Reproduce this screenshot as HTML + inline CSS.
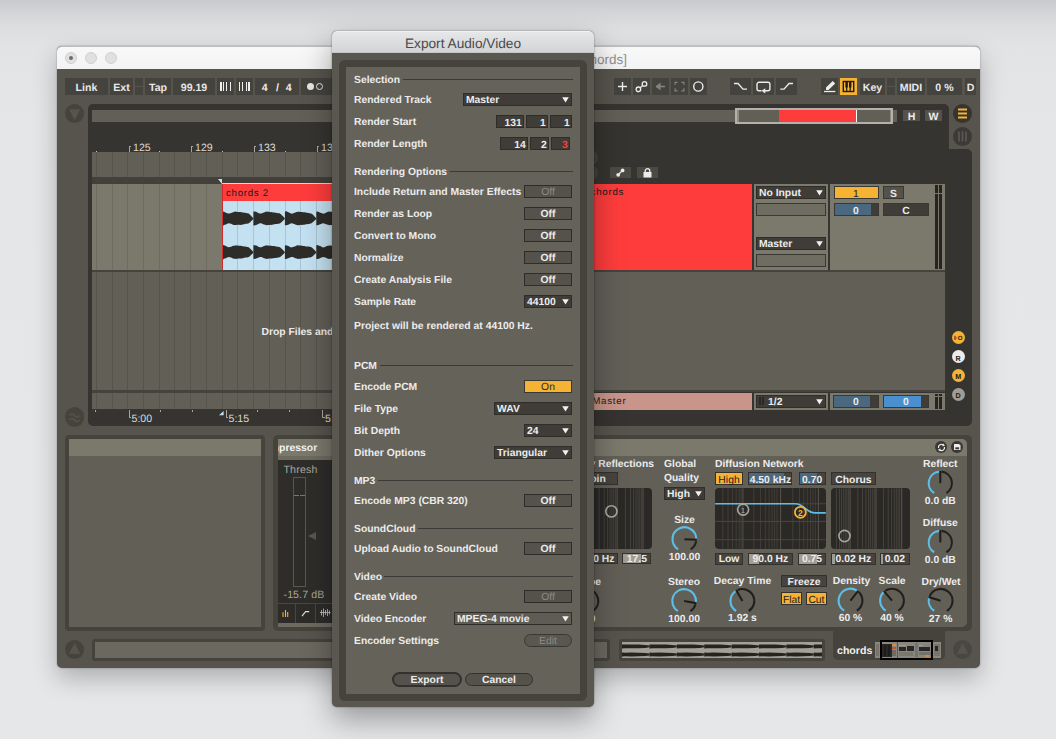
<!DOCTYPE html><html><head><meta charset="utf-8"><style>
html,body{margin:0;padding:0;}
body{width:1056px;height:739px;overflow:hidden;position:relative;background:#e4e5e7;}
.a{position:absolute;box-sizing:border-box;}
.t{font-family:"Liberation Sans",sans-serif;white-space:nowrap;text-rendering:geometricPrecision;}
svg{font-family:"Liberation Sans",sans-serif;}
</style></head><body>
<div class="a" style="left:0.00px;top:0.00px;width:1056.00px;height:739.00px;background:linear-gradient(to bottom,#c9cacd 0px,#d3d4d6 12px,#dcdddf 26px,#e2e3e5 45px,#e5e6e8 120px,#e6e7e9 739px);"></div>
<div class="a" style="left:57px;top:46px;width:923px;height:622px;border-radius:5px;background:#57544d;box-shadow:0 10px 24px rgba(0,0,0,0.25),0 0 2px rgba(0,0,0,0.35);"></div>
<div class="a" style="left:57.00px;top:46.00px;width:923.00px;height:23.00px;background:linear-gradient(#f8f8f8,#f3f3f3);border-radius:5px 5px 0 0;border-top:1px solid #bcbcbc;"></div>
<div class="a" style="left:65.00px;top:52.00px;width:12.00px;height:12.00px;background:#e0e0e0;border-radius:50%;border:1px solid #d0d0d0;"></div>
<div class="a" style="left:68.80px;top:55.80px;width:4.40px;height:4.40px;background:#6e6c66;border-radius:50%;"></div>
<div class="a" style="left:85.00px;top:52.00px;width:12.00px;height:12.00px;background:#e0e0e0;border-radius:50%;border:1px solid #d0d0d0;"></div>
<div class="a" style="left:105.00px;top:52.00px;width:12.00px;height:12.00px;background:#e0e0e0;border-radius:50%;border:1px solid #d0d0d0;"></div>
<div class="a t" style="left:227.00px;width:400px;text-align:right;top:52.77px;font-size:13.5px;line-height:13.5px;color:#8f8f8f;font-weight:normal;">Untitled &nbsp;[chords]</div>
<div class="a" style="left:65.00px;top:78.00px;width:43.00px;height:17.00px;background:#45433e;"></div>
<div class="a t" style="left:-113.50px;width:400px;text-align:center;top:82.63px;font-size:10.6px;line-height:10.6px;color:#e8e8e8;font-weight:bold;">Link</div>
<div class="a" style="left:110.00px;top:78.00px;width:23.00px;height:17.00px;background:#45433e;"></div>
<div class="a t" style="left:-78.50px;width:400px;text-align:center;top:82.63px;font-size:10.6px;line-height:10.6px;color:#e8e8e8;font-weight:bold;">Ext</div>
<div class="a" style="left:135.00px;top:78.00px;width:8.00px;height:17.00px;background:#45433e;"></div>
<div class="a" style="left:135.00px;top:86.00px;width:8.00px;height:1.00px;background:#57544d;"></div>
<div class="a" style="left:145.00px;top:78.00px;width:26.00px;height:17.00px;background:#45433e;"></div>
<div class="a t" style="left:-42.00px;width:400px;text-align:center;top:82.63px;font-size:10.6px;line-height:10.6px;color:#e8e8e8;font-weight:bold;">Tap</div>
<div class="a" style="left:173.00px;top:78.00px;width:42.00px;height:17.00px;background:#45433e;"></div>
<div class="a t" style="left:-6.00px;width:400px;text-align:center;top:82.63px;font-size:10.6px;line-height:10.6px;color:#e8e8e8;font-weight:bold;">99.19</div>
<div class="a" style="left:217.00px;top:78.00px;width:17.00px;height:17.00px;background:#45433e;"></div>
<div class="a" style="left:236.00px;top:78.00px;width:17.00px;height:17.00px;background:#45433e;"></div>
<div class="a" style="left:219.80px;top:82.00px;width:2.00px;height:9.00px;background:#eeeeee;"></div>
<div class="a" style="left:223.40px;top:82.00px;width:1.10px;height:9.00px;background:#eeeeee;"></div>
<div class="a" style="left:226.00px;top:82.00px;width:1.10px;height:9.00px;background:#eeeeee;"></div>
<div class="a" style="left:229.60px;top:82.00px;width:1.10px;height:9.00px;background:#eeeeee;"></div>
<div class="a" style="left:238.80px;top:82.00px;width:1.10px;height:9.00px;background:#eeeeee;"></div>
<div class="a" style="left:242.40px;top:82.00px;width:1.10px;height:9.00px;background:#eeeeee;"></div>
<div class="a" style="left:245.50px;top:82.00px;width:1.10px;height:9.00px;background:#eeeeee;"></div>
<div class="a" style="left:248.10px;top:82.00px;width:2.00px;height:9.00px;background:#eeeeee;"></div>
<div class="a" style="left:255.00px;top:78.00px;width:44.00px;height:17.00px;background:#45433e;"></div>
<div class="a t" style="left:64.80px;width:400px;text-align:center;top:82.63px;font-size:10.6px;line-height:10.6px;color:#ececec;font-weight:bold;">4</div>
<div class="a t" style="left:77.60px;width:400px;text-align:center;top:82.63px;font-size:10.6px;line-height:10.6px;color:#ececec;font-weight:bold;">/</div>
<div class="a t" style="left:88.80px;width:400px;text-align:center;top:82.63px;font-size:10.6px;line-height:10.6px;color:#ececec;font-weight:bold;">4</div>
<div class="a" style="left:301.00px;top:78.00px;width:39.00px;height:17.00px;background:#45433e;"></div>
<div class="a" style="left:306.60px;top:82.70px;width:7.60px;height:7.60px;background:#e6e6e6;border-radius:50%;"></div>
<div class="a" style="left:315.80px;top:82.90px;width:7.40px;height:7.40px;border-radius:50%;border:1.3px solid #e6e6e6;"></div>
<div class="a" style="left:614.00px;top:78.00px;width:17.00px;height:17.00px;background:#45433e;"></div>
<div class="a" style="left:633.00px;top:78.00px;width:17.00px;height:17.00px;background:#45433e;"></div>
<div class="a" style="left:652.00px;top:78.00px;width:17.00px;height:17.00px;background:#45433e;"></div>
<div class="a" style="left:671.00px;top:78.00px;width:17.00px;height:17.00px;background:#45433e;"></div>
<div class="a" style="left:690.00px;top:78.00px;width:17.00px;height:17.00px;background:#45433e;"></div>
<svg class="a" style="left:614px;top:78px;overflow:visible" width="17" height="17" viewBox="0 0 17 17"><path d="M4 8.5H13M8.5 4V13" stroke="#ececec" stroke-width="1.4"/></svg>
<svg class="a" style="left:633px;top:78px;overflow:visible" width="17" height="17" viewBox="0 0 17 17"><circle cx="5.4" cy="11.3" r="2.3" fill="none" stroke="#ececec" stroke-width="1.3"/><circle cx="11.5" cy="5.9" r="2.3" fill="none" stroke="#ececec" stroke-width="1.3"/><path d="M7.1 9.8L9.8 7.4" stroke="#ececec" stroke-width="1.3"/></svg>
<svg class="a" style="left:652px;top:78px;overflow:visible" width="17" height="17" viewBox="0 0 17 17"><path d="M4 8.5H13" stroke="#86837b" stroke-width="1.6"/><path d="M3.5 8.5L8.5 4.5V12.5Z" fill="#86837b"/></svg>
<svg class="a" style="left:671px;top:78px;overflow:visible" width="17" height="17" viewBox="0 0 17 17"><path d="M4.1 6.8V4.3H6.6M10.4 4.3H12.9V6.8M12.9 10.3V12.8H10.4M6.6 12.8H4.1V10.3" fill="none" stroke="#86837b" stroke-width="1.2"/></svg>
<svg class="a" style="left:690px;top:78px;overflow:visible" width="17" height="17" viewBox="0 0 17 17"><circle cx="8.3" cy="8.5" r="4.6" fill="none" stroke="#ececec" stroke-width="1.4"/></svg>
<div class="a" style="left:730.00px;top:78.00px;width:21.00px;height:17.00px;background:#45433e;"></div>
<div class="a" style="left:753.00px;top:78.00px;width:21.00px;height:17.00px;background:#45433e;"></div>
<div class="a" style="left:776.00px;top:78.00px;width:21.00px;height:17.00px;background:#45433e;"></div>
<svg class="a" style="left:730px;top:78px;overflow:visible" width="21" height="17" viewBox="0 0 21 17"><path d="M4 5.5H8L13 11.1H17" fill="none" stroke="#ececec" stroke-width="1.4"/></svg>
<svg class="a" style="left:753px;top:78px;overflow:visible" width="21" height="17" viewBox="0 0 21 17"><path d="M8.5 12.8H6A2 2 0 0 1 4 10.8V6.3A2 2 0 0 1 6 4.3H14.9A2 2 0 0 1 16.9 6.3V10.8A2 2 0 0 1 14.9 12.8H12" fill="none" stroke="#ececec" stroke-width="1.4"/><path d="M8.5 12.8L12.3 10.2V15.4Z" fill="#ececec"/></svg>
<svg class="a" style="left:776px;top:78px;overflow:visible" width="21" height="17" viewBox="0 0 21 17"><path d="M4.3 11.1H8L13 5.5H17" fill="none" stroke="#ececec" stroke-width="1.4"/></svg>
<div class="a" style="left:821.00px;top:78.00px;width:17.00px;height:17.00px;background:#45433e;"></div>
<svg class="a" style="left:821px;top:78px;overflow:visible" width="17" height="17" viewBox="0 0 17 17"><path d="M5 9.5L11.7 2.9L14.2 5.4L7.5 12.1H5Z" fill="#ececec"/><path d="M3 13.5H14.3" stroke="#ececec" stroke-width="1.3"/></svg>
<div class="a" style="left:840.00px;top:78.00px;width:17.00px;height:17.00px;background:#f6b232;"></div>
<svg class="a" style="left:840px;top:78px;overflow:visible" width="17" height="17" viewBox="0 0 17 17"><rect x="3.3" y="3.5" width="10.4" height="10" fill="none" stroke="#1c1b19" stroke-width="1.4"/><path d="M6.7 3.5V13.5M10.2 3.5V13.5" stroke="#1c1b19" stroke-width="1.2"/><rect x="5.4" y="3.5" width="2.4" height="6" fill="#1c1b19"/><rect x="9" y="3.5" width="2.4" height="6" fill="#1c1b19"/></svg>
<div class="a" style="left:860.00px;top:78.00px;width:25.00px;height:17.00px;background:#45433e;"></div>
<div class="a t" style="left:672.50px;width:400px;text-align:center;top:82.63px;font-size:10.6px;line-height:10.6px;color:#e8e8e8;font-weight:bold;">Key</div>
<div class="a" style="left:887.00px;top:78.00px;width:8.00px;height:17.00px;background:#45433e;"></div>
<div class="a" style="left:887.00px;top:86.00px;width:8.00px;height:1.00px;background:#57544d;"></div>
<div class="a" style="left:897.00px;top:78.00px;width:28.00px;height:17.00px;background:#45433e;"></div>
<div class="a t" style="left:711.00px;width:400px;text-align:center;top:82.63px;font-size:10.6px;line-height:10.6px;color:#e8e8e8;font-weight:bold;">MIDI</div>
<div class="a" style="left:927.00px;top:78.00px;width:35.00px;height:17.00px;background:#45433e;"></div>
<div class="a t" style="left:744.50px;width:400px;text-align:center;top:82.63px;font-size:10.6px;line-height:10.6px;color:#e8e8e8;font-weight:bold;">0 %</div>
<div class="a" style="left:965.00px;top:78.00px;width:11.00px;height:17.00px;background:#45433e;"></div>
<div class="a t" style="left:770.50px;width:400px;text-align:center;top:82.63px;font-size:10.6px;line-height:10.6px;color:#e8e8e8;font-weight:bold;">D</div>
<div class="a" style="left:65.00px;top:103.80px;width:19.20px;height:19.20px;background:#46433d;border-radius:50%;"></div>
<svg class="a" style="left:64px;top:103px;overflow:visible" width="21" height="21" viewBox="0 0 21 21"><polygon points="5,6.3 16.2,6.3 10.6,17.2" fill="#57544d"/></svg>
<div class="a" style="left:65.00px;top:407.40px;width:19.20px;height:19.20px;background:#46433d;border-radius:50%;"></div>
<svg class="a" style="left:64px;top:407px;overflow:visible" width="21" height="21" viewBox="0 0 21 21"><path d="M5.5 8.5C7.5 6.5 9 6.5 10.5 8.5S13.5 10.5 15.5 8.5M5.5 13C7.5 11 9 11 10.5 13S13.5 15 15.5 13" fill="none" stroke="#57544d" stroke-width="1.6"/></svg>
<div class="a" style="left:65.00px;top:639.70px;width:19.20px;height:19.20px;background:#46433d;border-radius:50%;"></div>
<svg class="a" style="left:64px;top:639px;overflow:visible" width="21" height="21" viewBox="0 0 21 21"><polygon points="5,14.8 16.2,14.8 10.6,4" fill="#57544d"/></svg>
<div class="a" style="left:88.00px;top:104.00px;width:861.00px;height:322.00px;background:#363430;border-radius:5px;"></div>
<div class="a" style="left:900.00px;top:149.00px;width:72.00px;height:277.00px;background:#363430;border-radius:5px;"></div>
<div class="a" style="left:92.00px;top:110.00px;width:805.00px;height:12.00px;background:#625f57;"></div>
<div class="a" style="left:735.00px;top:108.00px;width:158.00px;height:16.00px;border:2px solid #b3b1aa;"></div>
<div class="a" style="left:737.00px;top:110.00px;width:1.50px;height:12.00px;background:#8f8c85;"></div>
<div class="a" style="left:889.50px;top:110.00px;width:1.50px;height:12.00px;background:#8f8c85;"></div>
<div class="a" style="left:778.50px;top:110.00px;width:77.00px;height:12.00px;background:#ff3c3c;"></div>
<div class="a" style="left:855.50px;top:110.00px;width:1.50px;height:12.00px;background:#ffffff;"></div>
<div class="a" style="left:903.00px;top:110.00px;width:17.00px;height:11.00px;background:#55524b;"></div>
<div class="a t" style="left:711.50px;width:400px;text-align:center;top:112.23px;font-size:10.6px;line-height:10.6px;color:#ececec;font-weight:bold;">H</div>
<div class="a" style="left:925.00px;top:110.00px;width:17.00px;height:11.00px;background:#55524b;"></div>
<div class="a t" style="left:733.50px;width:400px;text-align:center;top:112.23px;font-size:10.6px;line-height:10.6px;color:#ececec;font-weight:bold;">W</div>
<div class="a" style="left:953.00px;top:104.10px;width:18.80px;height:18.80px;background:#363430;border-radius:50%;"></div>
<svg class="a" style="left:952px;top:103px;overflow:visible" width="21" height="21" viewBox="0 0 21 21"><path d="M6 6.5H15M6 10.5H15M6 14.5H15" stroke="#f6b232" stroke-width="2.2"/></svg>
<div class="a" style="left:953.00px;top:126.80px;width:18.80px;height:18.80px;background:#3c3a36;border-radius:50%;"></div>
<svg class="a" style="left:952px;top:126px;overflow:visible" width="21" height="21" viewBox="0 0 21 21"><path d="M7 5.5V15.5M10.5 5.5V15.5M14 5.5V15.5" stroke="#5d5a53" stroke-width="1.6"/></svg>
<div class="a" style="left:128.50px;top:146.00px;width:1.00px;height:6.00px;background:#a8a59d;"></div>
<div class="a" style="left:128.50px;top:146.00px;width:2.50px;height:1.00px;background:#a8a59d;"></div>
<div class="a t" style="left:133.00px;top:143.03px;font-size:10.6px;line-height:10.6px;color:#dcdad4;font-weight:normal;">125</div>
<div class="a" style="left:190.50px;top:146.00px;width:1.00px;height:6.00px;background:#a8a59d;"></div>
<div class="a" style="left:190.50px;top:146.00px;width:2.50px;height:1.00px;background:#a8a59d;"></div>
<div class="a t" style="left:195.00px;top:143.03px;font-size:10.6px;line-height:10.6px;color:#dcdad4;font-weight:normal;">129</div>
<div class="a" style="left:253.50px;top:146.00px;width:1.00px;height:6.00px;background:#a8a59d;"></div>
<div class="a" style="left:253.50px;top:146.00px;width:2.50px;height:1.00px;background:#a8a59d;"></div>
<div class="a t" style="left:258.00px;top:143.03px;font-size:10.6px;line-height:10.6px;color:#dcdad4;font-weight:normal;">133</div>
<div class="a" style="left:316.50px;top:146.00px;width:1.00px;height:6.00px;background:#a8a59d;"></div>
<div class="a" style="left:316.50px;top:146.00px;width:2.50px;height:1.00px;background:#a8a59d;"></div>
<div class="a t" style="left:321.00px;top:143.03px;font-size:10.6px;line-height:10.6px;color:#dcdad4;font-weight:normal;">137</div>
<div class="a" style="left:95.90px;top:151.00px;width:1.00px;height:1.00px;background:#c8c6c0;"></div>
<div class="a" style="left:159.00px;top:151.00px;width:1.00px;height:1.00px;background:#c8c6c0;"></div>
<div class="a" style="left:221.80px;top:151.00px;width:1.00px;height:1.00px;background:#c8c6c0;"></div>
<div class="a" style="left:285.00px;top:151.00px;width:1.00px;height:1.00px;background:#c8c6c0;"></div>
<div class="a" style="left:92.00px;top:177.00px;width:502.00px;height:7.00px;background:#43403b;"></div>
<div class="a" style="left:92.00px;top:270.00px;width:502.00px;height:2.00px;background:#46433d;"></div>
<div class="a" style="left:92.00px;top:390.00px;width:502.00px;height:3.00px;background:#46433d;"></div>
<div class="a" style="left:594.00px;top:270.00px;width:351.00px;height:2.00px;background:#46433d;"></div>
<div class="a" style="left:594.00px;top:390.00px;width:351.00px;height:2.00px;background:#46433d;"></div>
<div class="a" style="left:92.00px;top:152.00px;width:502.00px;height:25.00px;background:#625f57;"></div>
<div class="a" style="left:92.00px;top:184.00px;width:502.00px;height:86.00px;background:#7b786c;"></div>
<div class="a" style="left:92.00px;top:272.00px;width:502.00px;height:118.00px;background:#625f57;"></div>
<div class="a" style="left:92.00px;top:393.00px;width:502.00px;height:16.00px;background:#625f57;"></div>
<div class="a" style="left:96.00px;top:152.00px;width:1.00px;height:25.00px;background:#57544c;"></div>
<div class="a" style="left:96.00px;top:184.00px;width:1.00px;height:86.00px;background:#6e6b60;"></div>
<div class="a" style="left:96.00px;top:272.00px;width:1.00px;height:118.00px;background:#57544c;"></div>
<div class="a" style="left:96.00px;top:393.00px;width:1.00px;height:16.00px;background:#57544c;"></div>
<div class="a" style="left:112.00px;top:152.00px;width:1.00px;height:25.00px;background:#57544c;"></div>
<div class="a" style="left:112.00px;top:184.00px;width:1.00px;height:86.00px;background:#6e6b60;"></div>
<div class="a" style="left:112.00px;top:272.00px;width:1.00px;height:118.00px;background:#57544c;"></div>
<div class="a" style="left:112.00px;top:393.00px;width:1.00px;height:16.00px;background:#57544c;"></div>
<div class="a" style="left:127.00px;top:152.00px;width:1.00px;height:25.00px;background:#57544c;"></div>
<div class="a" style="left:127.00px;top:184.00px;width:1.00px;height:86.00px;background:#6e6b60;"></div>
<div class="a" style="left:127.00px;top:272.00px;width:1.00px;height:118.00px;background:#57544c;"></div>
<div class="a" style="left:127.00px;top:393.00px;width:1.00px;height:16.00px;background:#57544c;"></div>
<div class="a" style="left:143.00px;top:152.00px;width:1.00px;height:25.00px;background:#57544c;"></div>
<div class="a" style="left:143.00px;top:184.00px;width:1.00px;height:86.00px;background:#6e6b60;"></div>
<div class="a" style="left:143.00px;top:272.00px;width:1.00px;height:118.00px;background:#57544c;"></div>
<div class="a" style="left:143.00px;top:393.00px;width:1.00px;height:16.00px;background:#57544c;"></div>
<div class="a" style="left:159.00px;top:152.00px;width:1.00px;height:25.00px;background:#57544c;"></div>
<div class="a" style="left:159.00px;top:184.00px;width:1.00px;height:86.00px;background:#6e6b60;"></div>
<div class="a" style="left:159.00px;top:272.00px;width:1.00px;height:118.00px;background:#57544c;"></div>
<div class="a" style="left:159.00px;top:393.00px;width:1.00px;height:16.00px;background:#57544c;"></div>
<div class="a" style="left:174.00px;top:152.00px;width:1.00px;height:25.00px;background:#57544c;"></div>
<div class="a" style="left:174.00px;top:184.00px;width:1.00px;height:86.00px;background:#6e6b60;"></div>
<div class="a" style="left:174.00px;top:272.00px;width:1.00px;height:118.00px;background:#57544c;"></div>
<div class="a" style="left:174.00px;top:393.00px;width:1.00px;height:16.00px;background:#57544c;"></div>
<div class="a" style="left:190.00px;top:152.00px;width:1.00px;height:25.00px;background:#57544c;"></div>
<div class="a" style="left:190.00px;top:184.00px;width:1.00px;height:86.00px;background:#6e6b60;"></div>
<div class="a" style="left:190.00px;top:272.00px;width:1.00px;height:118.00px;background:#57544c;"></div>
<div class="a" style="left:190.00px;top:393.00px;width:1.00px;height:16.00px;background:#57544c;"></div>
<div class="a" style="left:206.00px;top:152.00px;width:1.00px;height:25.00px;background:#57544c;"></div>
<div class="a" style="left:206.00px;top:184.00px;width:1.00px;height:86.00px;background:#6e6b60;"></div>
<div class="a" style="left:206.00px;top:272.00px;width:1.00px;height:118.00px;background:#57544c;"></div>
<div class="a" style="left:206.00px;top:393.00px;width:1.00px;height:16.00px;background:#57544c;"></div>
<div class="a" style="left:222.00px;top:152.00px;width:1.00px;height:25.00px;background:#57544c;"></div>
<div class="a" style="left:222.00px;top:184.00px;width:1.00px;height:86.00px;background:#6e6b60;"></div>
<div class="a" style="left:222.00px;top:272.00px;width:1.00px;height:118.00px;background:#57544c;"></div>
<div class="a" style="left:222.00px;top:393.00px;width:1.00px;height:16.00px;background:#57544c;"></div>
<div class="a" style="left:237.00px;top:152.00px;width:1.00px;height:25.00px;background:#57544c;"></div>
<div class="a" style="left:237.00px;top:184.00px;width:1.00px;height:86.00px;background:#6e6b60;"></div>
<div class="a" style="left:237.00px;top:272.00px;width:1.00px;height:118.00px;background:#57544c;"></div>
<div class="a" style="left:237.00px;top:393.00px;width:1.00px;height:16.00px;background:#57544c;"></div>
<div class="a" style="left:253.00px;top:152.00px;width:1.00px;height:25.00px;background:#57544c;"></div>
<div class="a" style="left:253.00px;top:184.00px;width:1.00px;height:86.00px;background:#6e6b60;"></div>
<div class="a" style="left:253.00px;top:272.00px;width:1.00px;height:118.00px;background:#57544c;"></div>
<div class="a" style="left:253.00px;top:393.00px;width:1.00px;height:16.00px;background:#57544c;"></div>
<div class="a" style="left:269.00px;top:152.00px;width:1.00px;height:25.00px;background:#57544c;"></div>
<div class="a" style="left:269.00px;top:184.00px;width:1.00px;height:86.00px;background:#6e6b60;"></div>
<div class="a" style="left:269.00px;top:272.00px;width:1.00px;height:118.00px;background:#57544c;"></div>
<div class="a" style="left:269.00px;top:393.00px;width:1.00px;height:16.00px;background:#57544c;"></div>
<div class="a" style="left:285.00px;top:152.00px;width:1.00px;height:25.00px;background:#57544c;"></div>
<div class="a" style="left:285.00px;top:184.00px;width:1.00px;height:86.00px;background:#6e6b60;"></div>
<div class="a" style="left:285.00px;top:272.00px;width:1.00px;height:118.00px;background:#57544c;"></div>
<div class="a" style="left:285.00px;top:393.00px;width:1.00px;height:16.00px;background:#57544c;"></div>
<div class="a" style="left:300.00px;top:152.00px;width:1.00px;height:25.00px;background:#57544c;"></div>
<div class="a" style="left:300.00px;top:184.00px;width:1.00px;height:86.00px;background:#6e6b60;"></div>
<div class="a" style="left:300.00px;top:272.00px;width:1.00px;height:118.00px;background:#57544c;"></div>
<div class="a" style="left:300.00px;top:393.00px;width:1.00px;height:16.00px;background:#57544c;"></div>
<div class="a" style="left:316.00px;top:152.00px;width:1.00px;height:25.00px;background:#57544c;"></div>
<div class="a" style="left:316.00px;top:184.00px;width:1.00px;height:86.00px;background:#6e6b60;"></div>
<div class="a" style="left:316.00px;top:272.00px;width:1.00px;height:118.00px;background:#57544c;"></div>
<div class="a" style="left:316.00px;top:393.00px;width:1.00px;height:16.00px;background:#57544c;"></div>
<div class="a" style="left:332.00px;top:152.00px;width:1.00px;height:25.00px;background:#57544c;"></div>
<div class="a" style="left:332.00px;top:184.00px;width:1.00px;height:86.00px;background:#6e6b60;"></div>
<div class="a" style="left:332.00px;top:272.00px;width:1.00px;height:118.00px;background:#57544c;"></div>
<div class="a" style="left:332.00px;top:393.00px;width:1.00px;height:16.00px;background:#57544c;"></div>
<div class="a" style="left:347.00px;top:152.00px;width:1.00px;height:25.00px;background:#57544c;"></div>
<div class="a" style="left:347.00px;top:184.00px;width:1.00px;height:86.00px;background:#6e6b60;"></div>
<div class="a" style="left:347.00px;top:272.00px;width:1.00px;height:118.00px;background:#57544c;"></div>
<div class="a" style="left:347.00px;top:393.00px;width:1.00px;height:16.00px;background:#57544c;"></div>
<div class="a" style="left:363.00px;top:152.00px;width:1.00px;height:25.00px;background:#57544c;"></div>
<div class="a" style="left:363.00px;top:184.00px;width:1.00px;height:86.00px;background:#6e6b60;"></div>
<div class="a" style="left:363.00px;top:272.00px;width:1.00px;height:118.00px;background:#57544c;"></div>
<div class="a" style="left:363.00px;top:393.00px;width:1.00px;height:16.00px;background:#57544c;"></div>
<div class="a" style="left:379.00px;top:152.00px;width:1.00px;height:25.00px;background:#57544c;"></div>
<div class="a" style="left:379.00px;top:184.00px;width:1.00px;height:86.00px;background:#6e6b60;"></div>
<div class="a" style="left:379.00px;top:272.00px;width:1.00px;height:118.00px;background:#57544c;"></div>
<div class="a" style="left:379.00px;top:393.00px;width:1.00px;height:16.00px;background:#57544c;"></div>
<div class="a" style="left:395.00px;top:152.00px;width:1.00px;height:25.00px;background:#57544c;"></div>
<div class="a" style="left:395.00px;top:184.00px;width:1.00px;height:86.00px;background:#6e6b60;"></div>
<div class="a" style="left:395.00px;top:272.00px;width:1.00px;height:118.00px;background:#57544c;"></div>
<div class="a" style="left:395.00px;top:393.00px;width:1.00px;height:16.00px;background:#57544c;"></div>
<div class="a" style="left:410.00px;top:152.00px;width:1.00px;height:25.00px;background:#57544c;"></div>
<div class="a" style="left:410.00px;top:184.00px;width:1.00px;height:86.00px;background:#6e6b60;"></div>
<div class="a" style="left:410.00px;top:272.00px;width:1.00px;height:118.00px;background:#57544c;"></div>
<div class="a" style="left:410.00px;top:393.00px;width:1.00px;height:16.00px;background:#57544c;"></div>
<div class="a" style="left:426.00px;top:152.00px;width:1.00px;height:25.00px;background:#57544c;"></div>
<div class="a" style="left:426.00px;top:184.00px;width:1.00px;height:86.00px;background:#6e6b60;"></div>
<div class="a" style="left:426.00px;top:272.00px;width:1.00px;height:118.00px;background:#57544c;"></div>
<div class="a" style="left:426.00px;top:393.00px;width:1.00px;height:16.00px;background:#57544c;"></div>
<div class="a" style="left:442.00px;top:152.00px;width:1.00px;height:25.00px;background:#57544c;"></div>
<div class="a" style="left:442.00px;top:184.00px;width:1.00px;height:86.00px;background:#6e6b60;"></div>
<div class="a" style="left:442.00px;top:272.00px;width:1.00px;height:118.00px;background:#57544c;"></div>
<div class="a" style="left:442.00px;top:393.00px;width:1.00px;height:16.00px;background:#57544c;"></div>
<div class="a" style="left:458.00px;top:152.00px;width:1.00px;height:25.00px;background:#57544c;"></div>
<div class="a" style="left:458.00px;top:184.00px;width:1.00px;height:86.00px;background:#6e6b60;"></div>
<div class="a" style="left:458.00px;top:272.00px;width:1.00px;height:118.00px;background:#57544c;"></div>
<div class="a" style="left:458.00px;top:393.00px;width:1.00px;height:16.00px;background:#57544c;"></div>
<div class="a" style="left:473.00px;top:152.00px;width:1.00px;height:25.00px;background:#57544c;"></div>
<div class="a" style="left:473.00px;top:184.00px;width:1.00px;height:86.00px;background:#6e6b60;"></div>
<div class="a" style="left:473.00px;top:272.00px;width:1.00px;height:118.00px;background:#57544c;"></div>
<div class="a" style="left:473.00px;top:393.00px;width:1.00px;height:16.00px;background:#57544c;"></div>
<div class="a" style="left:489.00px;top:152.00px;width:1.00px;height:25.00px;background:#57544c;"></div>
<div class="a" style="left:489.00px;top:184.00px;width:1.00px;height:86.00px;background:#6e6b60;"></div>
<div class="a" style="left:489.00px;top:272.00px;width:1.00px;height:118.00px;background:#57544c;"></div>
<div class="a" style="left:489.00px;top:393.00px;width:1.00px;height:16.00px;background:#57544c;"></div>
<div class="a" style="left:505.00px;top:152.00px;width:1.00px;height:25.00px;background:#57544c;"></div>
<div class="a" style="left:505.00px;top:184.00px;width:1.00px;height:86.00px;background:#6e6b60;"></div>
<div class="a" style="left:505.00px;top:272.00px;width:1.00px;height:118.00px;background:#57544c;"></div>
<div class="a" style="left:505.00px;top:393.00px;width:1.00px;height:16.00px;background:#57544c;"></div>
<div class="a" style="left:521.00px;top:152.00px;width:1.00px;height:25.00px;background:#57544c;"></div>
<div class="a" style="left:521.00px;top:184.00px;width:1.00px;height:86.00px;background:#6e6b60;"></div>
<div class="a" style="left:521.00px;top:272.00px;width:1.00px;height:118.00px;background:#57544c;"></div>
<div class="a" style="left:521.00px;top:393.00px;width:1.00px;height:16.00px;background:#57544c;"></div>
<div class="a" style="left:536.00px;top:152.00px;width:1.00px;height:25.00px;background:#57544c;"></div>
<div class="a" style="left:536.00px;top:184.00px;width:1.00px;height:86.00px;background:#6e6b60;"></div>
<div class="a" style="left:536.00px;top:272.00px;width:1.00px;height:118.00px;background:#57544c;"></div>
<div class="a" style="left:536.00px;top:393.00px;width:1.00px;height:16.00px;background:#57544c;"></div>
<div class="a" style="left:552.00px;top:152.00px;width:1.00px;height:25.00px;background:#57544c;"></div>
<div class="a" style="left:552.00px;top:184.00px;width:1.00px;height:86.00px;background:#6e6b60;"></div>
<div class="a" style="left:552.00px;top:272.00px;width:1.00px;height:118.00px;background:#57544c;"></div>
<div class="a" style="left:552.00px;top:393.00px;width:1.00px;height:16.00px;background:#57544c;"></div>
<div class="a" style="left:568.00px;top:152.00px;width:1.00px;height:25.00px;background:#57544c;"></div>
<div class="a" style="left:568.00px;top:184.00px;width:1.00px;height:86.00px;background:#6e6b60;"></div>
<div class="a" style="left:568.00px;top:272.00px;width:1.00px;height:118.00px;background:#57544c;"></div>
<div class="a" style="left:568.00px;top:393.00px;width:1.00px;height:16.00px;background:#57544c;"></div>
<div class="a" style="left:583.00px;top:152.00px;width:1.00px;height:25.00px;background:#57544c;"></div>
<div class="a" style="left:583.00px;top:184.00px;width:1.00px;height:86.00px;background:#6e6b60;"></div>
<div class="a" style="left:583.00px;top:272.00px;width:1.00px;height:118.00px;background:#57544c;"></div>
<div class="a" style="left:583.00px;top:393.00px;width:1.00px;height:16.00px;background:#57544c;"></div>
<div class="a" style="left:222.00px;top:184.00px;width:372.00px;height:17.00px;background:#ff3c3c;"></div>
<div class="a" style="left:222.00px;top:201.00px;width:372.00px;height:69.00px;background:#c4e1f1;"></div>
<div class="a" style="left:222.00px;top:184.00px;width:1.30px;height:86.00px;background:#d42a2a;"></div>
<div class="a" style="left:222.00px;top:183.00px;width:372.00px;height:1.00px;background:#bfe0f2;"></div>
<div class="a" style="left:237.00px;top:201.00px;width:1.00px;height:69.00px;background:#a6c5d6;"></div>
<div class="a" style="left:253.00px;top:201.00px;width:1.00px;height:69.00px;background:#a6c5d6;"></div>
<div class="a" style="left:269.00px;top:201.00px;width:1.00px;height:69.00px;background:#a6c5d6;"></div>
<div class="a" style="left:285.00px;top:201.00px;width:1.00px;height:69.00px;background:#a6c5d6;"></div>
<div class="a" style="left:300.00px;top:201.00px;width:1.00px;height:69.00px;background:#a6c5d6;"></div>
<div class="a" style="left:316.00px;top:201.00px;width:1.00px;height:69.00px;background:#a6c5d6;"></div>
<div class="a" style="left:332.00px;top:201.00px;width:1.00px;height:69.00px;background:#a6c5d6;"></div>
<div class="a" style="left:347.00px;top:201.00px;width:1.00px;height:69.00px;background:#a6c5d6;"></div>
<div class="a" style="left:363.00px;top:201.00px;width:1.00px;height:69.00px;background:#a6c5d6;"></div>
<div class="a" style="left:379.00px;top:201.00px;width:1.00px;height:69.00px;background:#a6c5d6;"></div>
<div class="a" style="left:395.00px;top:201.00px;width:1.00px;height:69.00px;background:#a6c5d6;"></div>
<div class="a" style="left:410.00px;top:201.00px;width:1.00px;height:69.00px;background:#a6c5d6;"></div>
<div class="a" style="left:426.00px;top:201.00px;width:1.00px;height:69.00px;background:#a6c5d6;"></div>
<div class="a" style="left:442.00px;top:201.00px;width:1.00px;height:69.00px;background:#a6c5d6;"></div>
<div class="a" style="left:458.00px;top:201.00px;width:1.00px;height:69.00px;background:#a6c5d6;"></div>
<div class="a" style="left:473.00px;top:201.00px;width:1.00px;height:69.00px;background:#a6c5d6;"></div>
<div class="a" style="left:489.00px;top:201.00px;width:1.00px;height:69.00px;background:#a6c5d6;"></div>
<div class="a" style="left:505.00px;top:201.00px;width:1.00px;height:69.00px;background:#a6c5d6;"></div>
<div class="a" style="left:521.00px;top:201.00px;width:1.00px;height:69.00px;background:#a6c5d6;"></div>
<div class="a" style="left:536.00px;top:201.00px;width:1.00px;height:69.00px;background:#a6c5d6;"></div>
<div class="a" style="left:552.00px;top:201.00px;width:1.00px;height:69.00px;background:#a6c5d6;"></div>
<div class="a" style="left:568.00px;top:201.00px;width:1.00px;height:69.00px;background:#a6c5d6;"></div>
<div class="a" style="left:583.00px;top:201.00px;width:1.00px;height:69.00px;background:#a6c5d6;"></div>
<div class="a t" style="left:226.00px;top:188.89px;font-size:9.7px;line-height:9.7px;color:#1a1918;font-weight:normal;letter-spacing:0.7px;">chords 2</div>
<svg class="a" style="left:218px;top:179px;overflow:visible" width="5" height="5" viewBox="0 0 5 5"><polygon points="0,0 4,0 4,5" fill="#c4e1f1"/></svg>
<svg class="a" style="left:0;top:0" width="1056" height="739"><defs><clipPath id="cc"><rect x="223" y="201" width="371" height="69"/></clipPath></defs><g clip-path="url(#cc)"><polygon fill="#2e2c29" points="222.0,210.0 223.3,211.5 224.6,211.9 225.9,212.7 227.2,213.2 228.5,213.6 229.8,213.4 231.2,212.9 232.5,212.4 233.8,211.9 235.1,211.6 236.4,211.7 237.7,212.0 239.0,211.9 240.3,212.1 241.6,212.3 242.9,212.6 244.2,212.8 245.6,212.8 246.9,213.3 248.2,213.2 249.5,214.2 250.8,215.6 252.1,216.9 253.4,218.2 253.4,219.0 252.1,220.2 250.8,221.5 249.5,222.7 248.2,223.6 246.9,223.7 245.6,223.8 244.2,224.3 242.9,224.5 241.6,224.7 240.3,224.9 239.0,224.8 237.7,224.8 236.4,225.1 235.1,225.0 233.8,225.0 232.5,224.6 231.2,223.8 229.8,223.5 228.5,223.2 227.2,223.7 225.9,224.5 224.6,224.7 223.3,225.5 222.0,226.9"/><polygon fill="#2e2c29" points="222.0,243.5 223.3,245.0 224.6,245.6 225.9,246.1 227.2,246.7 228.5,247.3 229.8,247.1 231.2,246.7 232.5,246.0 233.8,245.8 235.1,245.4 236.4,245.6 237.7,245.5 239.0,245.7 240.3,245.8 241.6,245.9 242.9,246.2 244.2,246.5 245.6,246.6 246.9,247.0 248.2,247.0 249.5,248.1 250.8,249.3 252.1,250.5 253.4,251.9 253.4,252.7 252.1,253.9 250.8,255.3 249.5,256.5 248.2,257.2 246.9,257.4 245.6,257.5 244.2,257.7 242.9,258.2 241.6,258.4 240.3,258.4 239.0,258.4 237.7,258.5 236.4,258.9 235.1,258.8 233.8,258.8 232.5,258.3 231.2,257.5 229.8,257.2 228.5,256.9 227.2,257.5 225.9,258.2 224.6,258.5 223.3,259.3 222.0,260.8"/><polygon fill="#2e2c29" points="253.4,211.5 254.7,211.4 256.1,211.8 257.4,212.6 258.7,213.2 260.0,213.6 261.3,213.5 262.6,213.0 263.9,212.6 265.2,211.9 266.5,211.6 267.8,211.7 269.1,211.8 270.4,212.2 271.8,212.1 273.1,212.4 274.4,212.5 275.7,212.8 277.0,213.0 278.3,213.2 279.6,213.3 280.9,214.2 282.2,215.6 283.5,216.8 284.8,218.2 284.8,219.0 283.5,220.2 282.2,221.4 280.9,222.8 279.6,223.4 278.3,223.7 277.0,224.0 275.7,224.1 274.4,224.3 273.1,224.5 271.8,224.9 270.4,224.7 269.1,225.0 267.8,225.0 266.5,225.2 265.2,224.8 263.9,224.5 262.6,224.0 261.3,223.3 260.0,223.3 258.7,223.7 257.4,224.4 256.1,224.9 254.7,225.5 253.4,225.3"/><polygon fill="#2e2c29" points="253.4,245.2 254.7,245.2 256.1,245.6 257.4,246.1 258.7,246.9 260.0,247.3 261.3,247.3 262.6,246.7 263.9,246.0 265.2,245.7 266.5,245.2 267.8,245.4 269.1,245.7 270.4,245.6 271.8,245.9 273.1,246.1 274.4,246.1 275.7,246.6 277.0,246.5 278.3,246.9 279.6,246.9 280.9,247.9 282.2,249.2 283.5,250.6 284.8,251.9 284.8,252.7 283.5,253.9 282.2,255.2 280.9,256.5 279.6,257.2 278.3,257.6 277.0,257.8 275.7,258.0 274.4,257.9 273.1,258.2 271.8,258.4 270.4,258.5 269.1,258.6 267.8,258.7 266.5,259.0 265.2,258.6 263.9,258.3 262.6,257.6 261.3,257.1 260.0,256.9 258.7,257.5 257.4,257.9 256.1,258.6 254.7,259.1 253.4,258.8"/><polygon fill="#2e2c29" points="284.9,211.6 286.2,211.3 287.5,211.8 288.8,212.4 290.1,213.0 291.4,213.8 292.7,213.6 294.0,212.9 295.3,212.5 296.7,211.9 298.0,211.7 299.3,211.8 300.6,212.0 301.9,212.0 303.2,212.3 304.5,212.2 305.8,212.4 307.1,212.7 308.4,213.1 309.7,213.2 311.0,213.4 312.4,214.2 313.7,215.6 315.0,216.9 316.3,218.2 316.3,219.0 315.0,220.2 313.7,221.4 312.4,222.6 311.0,223.6 309.7,223.8 308.4,223.9 307.1,224.3 305.8,224.2 304.5,224.7 303.2,224.8 301.9,225.0 300.6,224.8 299.3,225.2 298.0,225.3 296.7,224.9 295.3,224.6 294.0,224.0 292.7,223.4 291.4,223.3 290.1,223.8 288.8,224.5 287.5,225.0 286.2,225.2 284.9,225.2"/><polygon fill="#2e2c29" points="284.9,245.5 286.2,245.2 287.5,245.7 288.8,246.2 290.1,246.9 291.4,247.5 292.7,247.1 294.0,246.8 295.3,246.2 296.7,245.5 298.0,245.2 299.3,245.5 300.6,245.6 301.9,245.8 303.2,245.9 304.5,246.0 305.8,246.4 307.1,246.5 308.4,246.5 309.7,246.7 311.0,247.1 312.4,248.0 313.7,249.2 315.0,250.5 316.3,251.9 316.3,252.7 315.0,254.0 313.7,255.3 312.4,256.5 311.0,257.3 309.7,257.6 308.4,257.6 307.1,258.0 305.8,258.0 304.5,258.3 303.2,258.3 301.9,258.6 300.6,258.7 299.3,258.7 298.0,259.0 296.7,258.6 295.3,258.2 294.0,257.6 292.7,257.1 291.4,257.0 290.1,257.4 288.8,258.0 287.5,258.6 286.2,259.1 284.9,259.0"/><polygon fill="#2e2c29" points="316.3,211.8 317.6,211.6 318.9,211.9 320.2,212.7 321.6,213.0 322.9,213.8 324.2,213.6 325.5,212.9 326.8,212.3 328.1,211.8 329.4,211.5 330.7,211.7 332.0,211.8 333.3,212.2 334.6,212.1 335.9,212.4 337.3,212.6 338.6,212.7 339.9,213.0 341.2,213.2 342.5,213.5 343.8,214.1 345.1,215.5 346.4,216.9 347.7,218.2 347.7,219.0 346.4,220.3 345.1,221.4 343.8,222.7 342.5,223.6 341.2,223.7 339.9,223.9 338.6,224.1 337.3,224.4 335.9,224.4 334.6,224.8 333.3,224.8 332.0,225.1 330.7,224.9 329.4,225.2 328.1,224.8 326.8,224.5 325.5,224.1 324.2,223.6 322.9,223.3 321.6,223.7 320.2,224.2 318.9,224.7 317.6,225.3 316.3,225.3"/><polygon fill="#2e2c29" points="316.3,245.3 317.6,244.9 318.9,245.8 320.2,246.1 321.6,246.8 322.9,247.5 324.2,247.3 325.5,246.7 326.8,246.1 328.1,245.7 329.4,245.4 330.7,245.4 332.0,245.7 333.3,245.7 334.6,246.0 335.9,246.1 337.3,246.4 338.6,246.5 339.9,246.7 341.2,246.8 342.5,247.1 343.8,247.8 345.1,249.2 346.4,250.6 347.7,251.9 347.7,252.7 346.4,253.9 345.1,255.3 343.8,256.4 342.5,257.3 341.2,257.5 339.9,257.8 338.6,257.9 337.3,258.2 335.9,258.3 334.6,258.4 333.3,258.5 332.0,258.5 330.7,258.7 329.4,259.0 328.1,258.7 326.8,258.3 325.5,257.6 324.2,257.2 322.9,256.9 321.6,257.6 320.2,258.0 318.9,258.7 317.6,259.0 316.3,259.0"/><polygon fill="#2e2c29" points="347.8,211.5 349.1,211.3 350.4,212.1 351.7,212.7 353.0,213.0 354.3,213.8 355.6,213.5 356.9,212.9 358.2,212.6 359.5,212.0 360.8,211.6 362.2,212.0 363.5,211.9 364.8,212.1 366.1,212.0 367.4,212.3 368.7,212.6 370.0,212.9 371.3,212.8 372.6,213.0 373.9,213.3 375.2,214.3 376.5,215.5 377.9,216.9 379.2,218.2 379.2,219.0 377.9,220.3 376.5,221.5 375.2,222.8 373.9,223.6 372.6,223.7 371.3,223.8 370.0,224.3 368.7,224.4 367.4,224.4 366.1,224.7 364.8,224.9 363.5,225.0 362.2,225.0 360.8,225.3 359.5,224.9 358.2,224.6 356.9,223.8 355.6,223.4 354.3,223.4 353.0,223.9 351.7,224.4 350.4,224.8 349.1,225.3 347.8,225.4"/><polygon fill="#2e2c29" points="347.8,245.3 349.1,245.1 350.4,245.6 351.7,246.2 353.0,246.8 354.3,247.5 355.6,247.1 356.9,246.5 358.2,246.2 359.5,245.6 360.8,245.3 362.2,245.6 363.5,245.8 364.8,245.6 366.1,245.8 367.4,246.1 368.7,246.1 370.0,246.4 371.3,246.6 372.6,246.9 373.9,247.1 375.2,248.0 376.5,249.3 377.9,250.6 379.2,251.9 379.2,252.7 377.9,253.9 376.5,255.2 375.2,256.5 373.9,257.3 372.6,257.4 371.3,257.6 370.0,257.8 368.7,257.9 367.4,258.2 366.1,258.4 364.8,258.6 363.5,258.7 362.2,258.7 360.8,258.9 359.5,258.7 358.2,258.2 356.9,257.5 355.6,257.1 354.3,257.1 353.0,257.5 351.7,257.9 350.4,258.6 349.1,259.1 347.8,258.8"/><polygon fill="#2e2c29" points="379.2,211.7 380.5,211.4 381.8,211.9 383.1,212.5 384.4,213.2 385.7,213.7 387.1,213.6 388.4,212.9 389.7,212.3 391.0,211.7 392.3,211.6 393.6,211.7 394.9,211.8 396.2,211.9 397.5,212.1 398.8,212.5 400.1,212.5 401.4,212.7 402.8,213.1 404.1,213.3 405.4,213.3 406.7,214.2 408.0,215.5 409.3,216.8 410.6,218.2 410.6,219.0 409.3,220.3 408.0,221.4 406.7,222.9 405.4,223.6 404.1,223.8 402.8,224.0 401.4,224.1 400.1,224.4 398.8,224.6 397.5,224.8 396.2,224.8 394.9,224.9 393.6,225.3 392.3,225.2 391.0,224.9 389.7,224.6 388.4,223.8 387.1,223.4 385.7,223.3 384.4,223.7 383.1,224.2 381.8,225.0 380.5,225.5 379.2,225.1"/><polygon fill="#2e2c29" points="379.2,245.4 380.5,245.1 381.8,245.8 383.1,246.2 384.4,246.7 385.7,247.3 387.1,247.1 388.4,246.6 389.7,246.0 391.0,245.5 392.3,245.5 393.6,245.6 394.9,245.7 396.2,245.7 397.5,245.9 398.8,246.1 400.1,246.2 401.4,246.6 402.8,246.6 404.1,246.9 405.4,247.0 406.7,248.1 408.0,249.2 409.3,250.6 410.6,251.9 410.6,252.7 409.3,253.9 408.0,255.1 406.7,256.4 405.4,257.2 404.1,257.5 402.8,257.6 401.4,258.0 400.1,258.0 398.8,258.2 397.5,258.5 396.2,258.6 394.9,258.7 393.6,258.7 392.3,258.7 391.0,258.6 389.7,258.1 388.4,257.8 387.1,257.1 385.7,257.0 384.4,257.5 383.1,257.9 381.8,258.7 380.5,259.3 379.2,258.8"/><polygon fill="#2e2c29" points="410.6,211.6 411.9,211.6 413.3,212.1 414.6,212.7 415.9,213.1 417.2,213.6 418.5,213.5 419.8,213.1 421.1,212.5 422.4,211.9 423.7,211.6 425.0,211.9 426.3,211.8 427.6,211.9 429.0,212.0 430.3,212.4 431.6,212.4 432.9,212.8 434.2,212.9 435.5,213.1 436.8,213.5 438.1,214.3 439.4,215.6 440.7,216.8 442.0,218.2 442.0,219.0 440.7,220.2 439.4,221.5 438.1,222.6 436.8,223.5 435.5,223.6 434.2,224.1 432.9,224.0 431.6,224.4 430.3,224.5 429.0,224.6 427.6,224.8 426.3,224.9 425.0,224.9 423.7,225.1 422.4,224.8 421.1,224.3 419.8,224.1 418.5,223.4 417.2,223.1 415.9,223.8 414.6,224.2 413.3,224.9 411.9,225.3 410.6,225.1"/><polygon fill="#2e2c29" points="410.6,245.2 411.9,244.9 413.3,245.8 414.6,246.1 415.9,246.9 417.2,247.5 418.5,247.2 419.8,246.5 421.1,246.0 422.4,245.5 423.7,245.2 425.0,245.5 426.3,245.5 427.6,245.8 429.0,245.8 430.3,246.0 431.6,246.2 432.9,246.4 434.2,246.7 435.5,246.8 436.8,247.1 438.1,247.9 439.4,249.2 440.7,250.5 442.0,251.9 442.0,252.7 440.7,254.0 439.4,255.2 438.1,256.5 436.8,257.4 435.5,257.3 434.2,257.7 432.9,257.7 431.6,257.9 430.3,258.2 429.0,258.5 427.6,258.4 426.3,258.7 425.0,258.7 423.7,258.9 422.4,258.7 421.1,258.2 419.8,257.6 418.5,257.2 417.2,256.9 415.9,257.6 414.6,257.9 413.3,258.6 411.9,258.9 410.6,259.1"/><polygon fill="#2e2c29" points="442.1,211.8 443.4,211.2 444.7,212.0 446.0,212.7 447.3,213.2 448.6,213.8 449.9,213.5 451.2,213.0 452.5,212.5 453.9,211.9 455.2,211.6 456.5,211.8 457.8,212.0 459.1,211.9 460.4,212.3 461.7,212.4 463.0,212.7 464.3,212.8 465.6,212.9 466.9,213.1 468.2,213.4 469.6,214.3 470.9,215.5 472.2,216.8 473.5,218.2 473.5,219.0 472.2,220.2 470.9,221.5 469.6,222.6 468.2,223.6 466.9,223.9 465.6,224.0 464.3,224.3 463.0,224.3 461.7,224.7 460.4,224.9 459.1,224.7 457.8,224.8 456.5,225.0 455.2,225.3 453.9,225.1 452.5,224.5 451.2,224.1 449.9,223.3 448.6,223.3 447.3,223.7 446.0,224.4 444.7,224.7 443.4,225.3 442.1,225.2"/><polygon fill="#2e2c29" points="442.1,245.2 443.4,245.2 444.7,245.9 446.0,246.2 447.3,246.8 448.6,247.5 449.9,247.0 451.2,246.7 452.5,246.2 453.9,245.4 455.2,245.2 456.5,245.4 457.8,245.6 459.1,245.6 460.4,245.7 461.7,245.9 463.0,246.1 464.3,246.5 465.6,246.8 466.9,246.8 468.2,247.1 469.6,248.1 470.9,249.3 472.2,250.6 473.5,251.9 473.5,252.7 472.2,254.0 470.9,255.2 469.6,256.5 468.2,257.3 466.9,257.4 465.6,257.5 464.3,258.0 463.0,258.2 461.7,258.2 460.4,258.4 459.1,258.7 457.8,258.6 456.5,258.9 455.2,259.1 453.9,258.7 452.5,258.0 451.2,257.5 449.9,257.1 448.6,256.9 447.3,257.5 446.0,258.0 444.7,258.6 443.4,259.1 442.1,258.8"/><polygon fill="#2e2c29" points="473.5,211.8 474.8,211.5 476.1,212.1 477.4,212.5 478.8,213.0 480.1,213.7 481.4,213.5 482.7,213.0 484.0,212.5 485.3,212.0 486.6,211.5 487.9,211.9 489.2,211.8 490.5,212.2 491.8,212.1 493.1,212.5 494.5,212.4 495.8,212.6 497.1,212.8 498.4,213.3 499.7,213.4 501.0,214.4 502.3,215.6 503.6,216.9 504.9,218.2 504.9,219.0 503.6,220.3 502.3,221.5 501.0,222.8 499.7,223.5 498.4,223.6 497.1,223.8 495.8,224.3 494.5,224.3 493.1,224.4 491.8,224.6 490.5,224.8 489.2,224.8 487.9,225.0 486.6,225.3 485.3,224.9 484.0,224.6 482.7,224.0 481.4,223.4 480.1,223.2 478.8,223.9 477.4,224.5 476.1,225.0 474.8,225.3 473.5,225.2"/><polygon fill="#2e2c29" points="473.5,245.5 474.8,245.1 476.1,245.5 477.4,246.3 478.8,246.7 480.1,247.4 481.4,247.2 482.7,246.8 484.0,246.1 485.3,245.5 486.6,245.3 487.9,245.4 489.2,245.6 490.5,245.9 491.8,245.8 493.1,246.0 494.5,246.3 495.8,246.3 497.1,246.5 498.4,246.9 499.7,247.1 501.0,247.9 502.3,249.2 503.6,250.6 504.9,251.9 504.9,252.7 503.6,253.9 502.3,255.1 501.0,256.5 499.7,257.4 498.4,257.5 497.1,257.6 495.8,257.8 494.5,258.0 493.1,258.2 491.8,258.6 490.5,258.4 489.2,258.7 487.9,258.8 486.6,259.1 485.3,258.6 484.0,258.3 482.7,257.5 481.4,257.1 480.1,257.0 478.8,257.6 477.4,257.9 476.1,258.7 474.8,259.2 473.5,258.9"/><polygon fill="#2e2c29" points="505.0,211.5 506.3,211.6 507.6,212.0 508.9,212.4 510.2,213.1 511.5,213.6 512.8,213.5 514.1,213.0 515.4,212.3 516.7,212.0 518.0,211.7 519.4,211.9 520.7,212.1 522.0,212.1 523.3,212.2 524.6,212.2 525.9,212.4 527.2,212.8 528.5,213.1 529.8,213.2 531.1,213.4 532.4,214.3 533.7,215.6 535.1,216.9 536.4,218.2 536.4,219.0 535.1,220.3 533.7,221.6 532.4,222.9 531.1,223.4 529.8,223.7 528.5,223.9 527.2,224.3 525.9,224.2 524.6,224.6 523.3,224.8 522.0,224.7 520.7,224.9 519.4,225.3 518.0,225.1 516.7,224.9 515.4,224.6 514.1,223.9 512.8,223.6 511.5,223.2 510.2,223.7 508.9,224.5 507.6,224.9 506.3,225.5 505.0,225.4"/><polygon fill="#2e2c29" points="505.0,245.4 506.3,245.0 507.6,245.8 508.9,246.1 510.2,246.7 511.5,247.4 512.8,247.2 514.1,246.7 515.4,246.3 516.7,245.7 518.0,245.5 519.4,245.3 520.7,245.4 522.0,245.8 523.3,245.9 524.6,246.1 525.9,246.3 527.2,246.4 528.5,246.7 529.8,246.9 531.1,247.0 532.4,247.9 533.7,249.2 535.1,250.5 536.4,251.9 536.4,252.7 535.1,254.0 533.7,255.1 532.4,256.5 531.1,257.2 529.8,257.5 528.5,257.7 527.2,257.9 525.9,258.1 524.6,258.1 523.3,258.5 522.0,258.7 520.7,258.6 519.4,259.0 518.0,258.8 516.7,258.8 515.4,258.0 514.1,257.5 512.8,257.3 511.5,256.8 510.2,257.5 508.9,257.9 507.6,258.7 506.3,259.0 505.0,258.8"/><polygon fill="#2e2c29" points="536.4,211.7 537.7,211.2 539.0,211.8 540.3,212.7 541.6,213.0 542.9,213.6 544.3,213.4 545.6,212.9 546.9,212.6 548.2,212.0 549.5,211.7 550.8,211.8 552.1,211.7 553.4,211.9 554.7,212.2 556.0,212.4 557.3,212.5 558.6,212.8 560.0,213.0 561.3,213.2 562.6,213.4 563.9,214.1 565.2,215.6 566.5,216.9 567.8,218.2 567.8,219.0 566.5,220.2 565.2,221.5 563.9,222.7 562.6,223.7 561.3,223.8 560.0,224.1 558.6,224.2 557.3,224.4 556.0,224.4 554.7,224.9 553.4,225.0 552.1,225.1 550.8,225.1 549.5,225.1 548.2,225.0 546.9,224.5 545.6,223.9 544.3,223.3 542.9,223.3 541.6,223.9 540.3,224.5 539.0,224.7 537.7,225.4 536.4,225.1"/><polygon fill="#2e2c29" points="536.4,245.5 537.7,245.2 539.0,245.7 540.3,246.2 541.6,246.9 542.9,247.3 544.3,247.2 545.6,246.7 546.9,246.1 548.2,245.6 549.5,245.5 550.8,245.4 552.1,245.8 553.4,245.8 554.7,245.8 556.0,246.0 557.3,246.1 558.6,246.3 560.0,246.6 561.3,246.7 562.6,247.1 563.9,248.0 565.2,249.2 566.5,250.6 567.8,251.9 567.8,252.7 566.5,253.9 565.2,255.2 563.9,256.4 562.6,257.4 561.3,257.4 560.0,257.5 558.6,257.8 557.3,258.2 556.0,258.3 554.7,258.6 553.4,258.4 552.1,258.6 550.8,258.6 549.5,258.9 548.2,258.5 546.9,258.3 545.6,257.6 544.3,257.2 542.9,256.9 541.6,257.6 540.3,258.2 539.0,258.5 537.7,259.3 536.4,259.1"/><polygon fill="#2e2c29" points="567.8,211.5 569.1,211.5 570.5,212.0 571.8,212.5 573.1,213.1 574.4,213.6 575.7,213.6 577.0,212.9 578.3,212.6 579.6,211.9 580.9,211.5 582.2,211.8 583.5,211.9 584.8,212.1 586.2,212.3 587.5,212.5 588.8,212.5 590.1,212.9 591.4,213.0 592.7,213.1 594.0,213.2 595.3,214.2 596.6,215.6 597.9,216.9 599.2,218.2 599.2,219.0 597.9,220.2 596.6,221.6 595.3,222.7 594.0,223.6 592.7,223.7 591.4,224.1 590.1,224.1 588.8,224.4 587.5,224.7 586.2,224.8 584.8,224.8 583.5,225.1 582.2,225.1 580.9,225.3 579.6,224.9 578.3,224.3 577.0,224.1 575.7,223.4 574.4,223.3 573.1,223.7 571.8,224.4 570.5,224.9 569.1,225.4 567.8,225.1"/><polygon fill="#2e2c29" points="567.8,245.2 569.1,245.0 570.5,245.8 571.8,246.3 573.1,246.9 574.4,247.5 575.7,247.1 577.0,246.5 578.3,246.2 579.6,245.8 580.9,245.4 582.2,245.3 583.5,245.6 584.8,245.9 586.2,246.0 587.5,246.1 588.8,246.3 590.1,246.4 591.4,246.6 592.7,246.8 594.0,247.2 595.3,248.0 596.6,249.2 597.9,250.6 599.2,251.9 599.2,252.7 597.9,253.9 596.6,255.2 595.3,256.5 594.0,257.3 592.7,257.5 591.4,257.6 590.1,257.8 588.8,258.0 587.5,258.1 586.2,258.5 584.8,258.4 583.5,258.6 582.2,258.6 580.9,259.0 579.6,258.7 578.3,258.0 577.0,257.6 575.7,257.1 574.4,257.0 573.1,257.6 571.8,258.0 570.5,258.4 569.1,259.2 567.8,259.1"/></g></svg>
<div class="a t" style="left:261.50px;top:328.24px;font-size:10.35px;line-height:10.35px;color:#ebebeb;font-weight:bold;">Drop Files and Devices Here</div>
<div class="a" style="left:128.50px;top:410.00px;width:1.00px;height:7.50px;background:#a8a59d;"></div>
<div class="a" style="left:128.50px;top:416.50px;width:2.50px;height:1.00px;background:#a8a59d;"></div>
<div class="a t" style="left:131.50px;top:414.03px;font-size:10.6px;line-height:10.6px;color:#dcdad4;font-weight:normal;">5:00</div>
<div class="a" style="left:225.50px;top:410.00px;width:1.00px;height:7.50px;background:#a8a59d;"></div>
<div class="a" style="left:225.50px;top:416.50px;width:2.50px;height:1.00px;background:#a8a59d;"></div>
<div class="a t" style="left:228.50px;top:414.03px;font-size:10.6px;line-height:10.6px;color:#dcdad4;font-weight:normal;">5:15</div>
<div class="a" style="left:322.00px;top:410.00px;width:1.00px;height:7.50px;background:#a8a59d;"></div>
<div class="a" style="left:322.00px;top:416.50px;width:2.50px;height:1.00px;background:#a8a59d;"></div>
<div class="a t" style="left:325.00px;top:414.03px;font-size:10.6px;line-height:10.6px;color:#dcdad4;font-weight:normal;">5:30</div>
<div class="a" style="left:95.00px;top:410.00px;width:1.00px;height:1.50px;background:#a8a59d;"></div>
<div class="a" style="left:159.90px;top:410.00px;width:1.00px;height:1.50px;background:#a8a59d;"></div>
<div class="a" style="left:191.90px;top:410.00px;width:1.00px;height:1.50px;background:#a8a59d;"></div>
<div class="a" style="left:256.80px;top:410.00px;width:1.00px;height:1.50px;background:#a8a59d;"></div>
<div class="a" style="left:288.80px;top:410.00px;width:1.00px;height:1.50px;background:#a8a59d;"></div>
<svg class="a" style="left:218.5px;top:411px;overflow:visible" width="5" height="5" viewBox="0 0 5 5"><polygon points="0,4.2 4.6,0 4.6,4.2" fill="#c4e1f1"/></svg>
<div class="a" style="left:594.00px;top:184.00px;width:158.00px;height:86.00px;background:#ff3c3c;"></div>
<div class="a t" style="left:590.60px;top:187.99px;font-size:9.7px;line-height:9.7px;color:#1a1918;font-weight:normal;letter-spacing:0.75px;">chords</div>
<div class="a" style="left:754.00px;top:184.00px;width:74.00px;height:86.00px;background:#7b786c;"></div>
<div class="a" style="left:830.00px;top:184.00px;width:115.00px;height:86.00px;background:#7b786c;"></div>
<div class="a" style="left:580.50px;top:148.70px;width:17.00px;height:17.00px;background:#45423d;border-radius:50%;"></div>
<div class="a" style="left:580.50px;top:163.80px;width:17.00px;height:17.00px;background:#45423d;border-radius:50%;"></div>
<div class="a" style="left:610.00px;top:167.00px;width:21.00px;height:11.00px;background:#4d4a44;"></div>
<div class="a" style="left:637.00px;top:167.00px;width:21.00px;height:11.00px;background:#4d4a44;"></div>
<svg class="a" style="left:610px;top:167px;overflow:visible" width="21" height="11" viewBox="0 0 21 11"><circle cx="8.2" cy="7.8" r="1.9" fill="#ececec"/><circle cx="12.6" cy="3.4" r="1.9" fill="#ececec"/><path d="M8.2 7.8L12.6 3.4" stroke="#ececec" stroke-width="1.3"/></svg>
<svg class="a" style="left:637px;top:167px;overflow:visible" width="21" height="11" viewBox="0 0 21 11"><rect x="6.5" y="5" width="8" height="5.5" fill="#ececec"/><path d="M8.2 5.2V4A2.3 2.3 0 0 1 12.8 4V5.2" fill="none" stroke="#ececec" stroke-width="1.3"/></svg>
<div class="a" style="left:756.00px;top:186.00px;width:70.00px;height:13.00px;background:#403d38;border:1px solid #2f2d2a;"></div>
<div class="a t" style="left:759.00px;top:189.24px;font-size:10.35px;line-height:10.35px;color:#ececec;font-weight:bold;">No Input</div>
<svg class="a" style="left:815px;top:189px;overflow:visible" width="9" height="8" viewBox="0 0 9 8"><polygon points="1.2,1.2 7.8,1.2 4.5,6.6" fill="#f2f2f2"/></svg>
<div class="a" style="left:756.00px;top:203.00px;width:70.00px;height:13.00px;background:#6f6c62;border:1px solid #3a3834;"></div>
<div class="a" style="left:756.00px;top:237.00px;width:70.00px;height:13.00px;background:#403d38;border:1px solid #2f2d2a;"></div>
<div class="a t" style="left:759.00px;top:240.24px;font-size:10.35px;line-height:10.35px;color:#ececec;font-weight:bold;">Master</div>
<svg class="a" style="left:815px;top:240px;overflow:visible" width="9" height="8" viewBox="0 0 9 8"><polygon points="1.2,1.2 7.8,1.2 4.5,6.6" fill="#f2f2f2"/></svg>
<div class="a" style="left:756.00px;top:254.00px;width:70.00px;height:13.00px;background:#6f6c62;border:1px solid #3a3834;"></div>
<div class="a" style="left:833.50px;top:186.00px;width:45.00px;height:13.00px;background:#f6b232;border:1px solid #3a3834;"></div>
<div class="a t" style="left:656.00px;width:400px;text-align:center;top:189.74px;font-size:10.35px;line-height:10.35px;color:#222;font-weight:normal;">1</div>
<div class="a" style="left:883.00px;top:186.00px;width:21.00px;height:13.00px;background:#55524b;border:1px solid #3a3834;"></div>
<div class="a t" style="left:693.50px;width:400px;text-align:center;top:189.74px;font-size:10.35px;line-height:10.35px;color:#ececec;font-weight:bold;">S</div>
<div class="a" style="left:833.50px;top:203.00px;width:45.00px;height:13.00px;background:#403d38;border:1px solid #3a3834;"></div>
<div class="a" style="left:834.50px;top:204.00px;width:36.00px;height:11.00px;background:#4a6880;"></div>
<div class="a t" style="left:656.00px;width:400px;text-align:center;top:206.74px;font-size:10.35px;line-height:10.35px;color:#ececec;font-weight:bold;">0</div>
<div class="a" style="left:883.00px;top:203.00px;width:46.00px;height:13.00px;background:#403d38;border:1px solid #3a3834;"></div>
<div class="a t" style="left:706.00px;width:400px;text-align:center;top:206.74px;font-size:10.35px;line-height:10.35px;color:#ececec;font-weight:bold;">C</div>
<div class="a" style="left:934.80px;top:185.00px;width:3.20px;height:84.00px;background:#262422;"></div>
<div class="a" style="left:938.90px;top:185.00px;width:3.10px;height:84.00px;background:#262422;"></div>
<div class="a" style="left:934.50px;top:193.00px;width:8.00px;height:1.00px;background:#7b786c;"></div>
<div class="a" style="left:594.00px;top:272.00px;width:351.00px;height:118.00px;background:#625f57;"></div>
<div class="a" style="left:594.00px;top:392.50px;width:158.00px;height:17.50px;background:#c9958a;"></div>
<div class="a t" style="left:592.30px;top:397.39px;font-size:9.7px;line-height:9.7px;color:#1e1a19;font-weight:normal;letter-spacing:0.75px;">Master</div>
<div class="a" style="left:754.00px;top:392.50px;width:74.00px;height:17.50px;background:#7b786c;"></div>
<div class="a" style="left:756.00px;top:394.50px;width:70.00px;height:13.00px;background:#403d38;border:1px solid #2f2d2a;"></div>
<div class="a t" style="left:768.00px;top:397.74px;font-size:10.35px;line-height:10.35px;color:#ececec;font-weight:bold;">1/2</div>
<svg class="a" style="left:815px;top:397.5px;overflow:visible" width="9" height="8" viewBox="0 0 9 8"><polygon points="1.2,1.2 7.8,1.2 4.5,6.6" fill="#f2f2f2"/></svg>
<div class="a" style="left:758.50px;top:397.00px;width:2.00px;height:8.00px;background:#2a2826;"></div>
<div class="a" style="left:761.50px;top:397.00px;width:2.00px;height:8.00px;background:#2a2826;"></div>
<div class="a" style="left:830.00px;top:392.50px;width:115.00px;height:17.50px;background:#7b786c;"></div>
<div class="a" style="left:833.00px;top:394.50px;width:46.00px;height:13.00px;background:#403d38;border:1px solid #3a3834;"></div>
<div class="a" style="left:834.00px;top:395.50px;width:36.00px;height:11.00px;background:#4a6880;"></div>
<div class="a t" style="left:656.00px;width:400px;text-align:center;top:398.24px;font-size:10.35px;line-height:10.35px;color:#ececec;font-weight:bold;">0</div>
<div class="a" style="left:883.00px;top:394.50px;width:46.00px;height:13.00px;background:#403d38;border:1px solid #3a3834;"></div>
<div class="a" style="left:884.00px;top:395.50px;width:37.00px;height:11.00px;background:#4a90d0;"></div>
<div class="a t" style="left:706.00px;width:400px;text-align:center;top:398.24px;font-size:10.35px;line-height:10.35px;color:#ececec;font-weight:bold;">0</div>
<div class="a" style="left:934.80px;top:393.50px;width:3.20px;height:15.50px;background:#262422;"></div>
<div class="a" style="left:938.90px;top:393.50px;width:3.10px;height:15.50px;background:#262422;"></div>
<div class="a" style="left:934.50px;top:396.00px;width:8.00px;height:1.00px;background:#7b786c;"></div>
<div class="a" style="left:951.70px;top:330.90px;width:13.00px;height:13.00px;background:#f6b232;border-radius:50%;"></div>
<div class="a t" style="left:758.20px;width:400px;text-align:center;top:336.05px;font-size:6.2px;line-height:6.2px;color:#1c1b1a;font-weight:bold;letter-spacing:0px;">I·O</div>
<div class="a" style="left:951.70px;top:350.20px;width:13.00px;height:13.00px;background:#ececec;border-radius:50%;"></div>
<div class="a t" style="left:758.20px;width:400px;text-align:center;top:354.51px;font-size:7.2px;line-height:7.2px;color:#1c1b1a;font-weight:bold;letter-spacing:0px;">R</div>
<div class="a" style="left:951.70px;top:368.80px;width:13.00px;height:13.00px;background:#f6b232;border-radius:50%;"></div>
<div class="a t" style="left:758.20px;width:400px;text-align:center;top:373.11px;font-size:7.2px;line-height:7.2px;color:#1c1b1a;font-weight:bold;letter-spacing:0px;">M</div>
<div class="a" style="left:951.70px;top:387.70px;width:13.00px;height:13.00px;background:#a09d96;border-radius:50%;"></div>
<div class="a t" style="left:758.20px;width:400px;text-align:center;top:392.01px;font-size:7.2px;line-height:7.2px;color:#1c1b1a;font-weight:bold;letter-spacing:0px;">D</div>
<div class="a" style="left:65.00px;top:435.00px;width:200.00px;height:196.00px;background:#46433d;border-radius:4px;"></div>
<div class="a" style="left:69.00px;top:439.00px;width:192.00px;height:188.00px;background:#625f57;"></div>
<div class="a" style="left:69.00px;top:439.00px;width:192.00px;height:17.00px;background:#7b786c;"></div>
<div class="a" style="left:273.00px;top:435.00px;width:699.00px;height:196.00px;background:#46433d;border-radius:5px;"></div>
<div class="a" style="left:833.00px;top:620.00px;width:112.00px;height:40.00px;background:#46433d;border-radius:0 0 5px 5px;"></div>
<div class="a" style="left:278.00px;top:439.00px;width:689.00px;height:17.00px;background:#7b786c;border-radius:0 5px 0 0;"></div>
<div class="a" style="left:278.00px;top:456.00px;width:316.00px;height:4.00px;background:#6d6a60;"></div>
<div class="a" style="left:278.00px;top:460.00px;width:316.00px;height:143.00px;background:#2f2d2a;"></div>
<div class="a" style="left:278.00px;top:603.00px;width:316.00px;height:1.00px;background:#4a4742;"></div>
<div class="a" style="left:278.00px;top:604.00px;width:316.00px;height:19.00px;background:#2e2c29;"></div>
<div class="a" style="left:295.00px;top:604.00px;width:1.00px;height:19.00px;background:#4a4742;"></div>
<div class="a" style="left:315.00px;top:604.00px;width:1.00px;height:19.00px;background:#4a4742;"></div>
<div class="a" style="left:278.00px;top:623.00px;width:316.00px;height:4.00px;background:#6d6a60;"></div>
<div class="a" style="left:278px;top:439px;width:60px;height:17px;overflow:hidden;">
<div class="a t" style="left:-22px;top:5.20px;font-size:10.4px;line-height:10.4px;color:#f4f4f4;font-weight:bold;">Compressor</div></div>
<div class="a t" style="left:283.40px;top:464.73px;font-size:10.6px;line-height:10.6px;color:#aaa79e;font-weight:normal;letter-spacing:0.2px;">Thresh</div>
<div class="a" style="left:293.00px;top:477.00px;width:13.00px;height:110.00px;border:1px solid #5a5750;"></div>
<div class="a" style="left:294.00px;top:495.00px;width:5.00px;height:1.00px;background:#777;"></div>
<div class="a" style="left:300.00px;top:495.00px;width:5.00px;height:1.00px;background:#777;"></div>
<svg class="a" style="left:307px;top:531px;overflow:visible" width="10" height="10" viewBox="0 0 10 10"><polygon points="1,5 9,1 9,9" fill="#5a5750"/></svg>
<div class="a t" style="left:283.50px;top:589.63px;font-size:10.6px;line-height:10.6px;color:#aaa79e;font-weight:normal;letter-spacing:0.1px;">-15.7 dB</div>
<svg class="a" style="left:278px;top:603px;overflow:visible" width="60" height="20" viewBox="0 0 60 20"><path d="M5 14V9.3M7.5 14V7M9.7 14V9" stroke="#f6b232" stroke-width="1.1"/><path d="M24 13.2L27.6 8.6H31.2" fill="none" stroke="#ddd" stroke-width="1.1"/><path d="M42 9.5H52.5M43.5 7V12.5M45.5 5.5V14M47.5 7V12M49.5 6V13M51.5 7.5V11.5" stroke="#ccc" stroke-width="0.8"/></svg>
<div class="a" style="left:594.00px;top:456.00px;width:373.00px;height:171.00px;background:#625f57;border-radius:0 0 5px 0;"></div>
<div class="a" style="left:594px;top:439px;width:372px;height:188px;overflow:hidden;">
</div>
<div class="a" style="left:935.30px;top:441.40px;width:12.00px;height:12.00px;background:#3a3834;border-radius:50%;"></div>
<div class="a" style="left:950.70px;top:441.40px;width:12.00px;height:12.00px;background:#3a3834;border-radius:50%;"></div>
<svg class="a" style="left:935px;top:441px;overflow:visible" width="13" height="13" viewBox="0 0 13 13"><path d="M3.5 7A3 3 0 0 1 8.5 4.2M9.5 6A3 3 0 0 1 4.5 8.8" fill="none" stroke="#ececec" stroke-width="1.2"/><path d="M8 2.5L10 4.5L7.5 5.5Z M5 10.5L3 8.5L5.5 7.5Z" fill="#ececec"/></svg>
<svg class="a" style="left:950.7px;top:441.4px;overflow:visible" width="12" height="12" viewBox="0 0 12 12"><path d="M3 3H8L9.5 4.5V9H3Z" fill="#ececec"/><rect x="4.3" y="6.3" width="3.8" height="2" fill="#3a3834"/></svg>
<div class="a t" style="left:254.00px;width:400px;text-align:right;top:460.04px;font-size:10.35px;line-height:10.35px;color:#ececec;font-weight:bold;">Early Reflections</div>
<div class="a" style="left:560.00px;top:472.20px;width:57.70px;height:12.40px;background:#47443f;border:1px solid #33312d;"></div>
<div class="a t" style="left:583.30px;top:475.24px;font-size:10.35px;line-height:10.35px;color:#ececec;font-weight:bold;">Spin</div>
<div class="a" style="left:560.00px;top:488.20px;width:91.60px;height:60.60px;background:#2b2926;border-radius:4px;"></div>
<svg class="a" style="left:0;top:0;overflow:visible" width="1" height="1"><path d="M599.2 488.2V548.8" stroke="#45423d" stroke-width="1"/><path d="M604.2 488.2V548.8" stroke="#45423d" stroke-width="1"/><path d="M607.6 488.2V548.8" stroke="#45423d" stroke-width="1"/><path d="M610.0 488.2V548.8" stroke="#45423d" stroke-width="1"/><path d="M611.9 488.2V548.8" stroke="#45423d" stroke-width="1"/><path d="M613.7 488.2V548.8" stroke="#45423d" stroke-width="1"/><path d="M615.4 488.2V548.8" stroke="#45423d" stroke-width="1"/><path d="M617.1 488.2V548.8" stroke="#5a5750" stroke-width="1"/><path d="M625.5 488.2V548.8" stroke="#45423d" stroke-width="1"/><path d="M630.6 488.2V548.8" stroke="#45423d" stroke-width="1"/><path d="M633.6 488.2V548.8" stroke="#45423d" stroke-width="1"/><path d="M636.0 488.2V548.8" stroke="#45423d" stroke-width="1"/><path d="M638.0 488.2V548.8" stroke="#45423d" stroke-width="1"/><path d="M639.8 488.2V548.8" stroke="#45423d" stroke-width="1"/><path d="M641.4 488.2V548.8" stroke="#45423d" stroke-width="1"/><path d="M643.0 488.2V548.8" stroke="#5a5750" stroke-width="1"/><circle cx="611.4" cy="511.4" r="5.6" fill="none" stroke="#a8a59d" stroke-width="1.6"/></svg>
<div class="a" style="left:560.00px;top:552.90px;width:57.50px;height:11.60px;background:#47443f;border:1px solid #33312d;"></div>
<div class="a t" style="left:214.50px;width:400px;text-align:right;top:555.24px;font-size:10.35px;line-height:10.35px;color:#ececec;font-weight:bold;">20.0 Hz</div>
<div class="a" style="left:622.40px;top:552.90px;width:29.10px;height:11.60px;background:#47443f;border:1px solid #33312d;"></div>
<div class="a" style="left:623.40px;top:553.90px;width:17.40px;height:9.60px;background:#a09d95;"></div>
<div class="a t" style="left:436.95px;width:400px;text-align:center;top:555.24px;font-size:10.35px;line-height:10.35px;color:#ececec;font-weight:bold;">17.5</div>
<div class="a t" style="left:201.00px;width:400px;text-align:right;top:577.54px;font-size:10.35px;line-height:10.35px;color:#ececec;font-weight:bold;">Shape</div>
<svg class="a" style="left:0;top:0;overflow:visible" width="1" height="1"><path d="M580.09 611.09A11.9 11.9 0 0 1 585.36 589.15" fill="none" stroke="#5cbfea" stroke-width="2.1"/><path d="M587.64 589.17A11.9 11.9 0 0 1 592.71 611.09" fill="none" stroke="#22201e" stroke-width="2.1"/><path d="M586.40 601.00L586.40 588.50" stroke="#1f1d1b" stroke-width="2"/></svg>
<div class="a t" style="left:385.50px;width:400px;text-align:center;top:614.64px;font-size:10.35px;line-height:10.35px;color:#ececec;font-weight:bold;">0.50</div>
<div class="a t" style="left:664.00px;top:460.04px;font-size:10.35px;line-height:10.35px;color:#ececec;font-weight:bold;">Global</div>
<div class="a t" style="left:664.00px;top:473.64px;font-size:10.35px;line-height:10.35px;color:#ececec;font-weight:bold;">Quality</div>
<div class="a" style="left:664.00px;top:487.00px;width:41.00px;height:13.00px;background:#403d38;border:1px solid #2f2d2a;"></div>
<div class="a t" style="left:667.00px;top:490.24px;font-size:10.35px;line-height:10.35px;color:#ececec;font-weight:bold;">High</div>
<svg class="a" style="left:694px;top:490px;overflow:visible" width="9" height="8" viewBox="0 0 9 8"><polygon points="1.2,1.2 7.8,1.2 4.5,6.6" fill="#f2f2f2"/></svg>
<div class="a t" style="left:484.50px;width:400px;text-align:center;top:515.84px;font-size:10.35px;line-height:10.35px;color:#ececec;font-weight:bold;">Size</div>
<svg class="a" style="left:0;top:0;overflow:visible" width="1" height="1"><path d="M678.09 549.29A11.9 11.9 0 1 1 696.29 538.78" fill="none" stroke="#5cbfea" stroke-width="2.1"/><path d="M696.15 541.06A11.9 11.9 0 0 1 690.71 549.29" fill="none" stroke="#22201e" stroke-width="2.1"/><path d="M684.40 539.20L696.88 539.85" stroke="#1f1d1b" stroke-width="2"/></svg>
<div class="a t" style="left:484.50px;width:400px;text-align:center;top:552.84px;font-size:10.35px;line-height:10.35px;color:#ececec;font-weight:bold;">100.00</div>
<div class="a t" style="left:484.10px;width:400px;text-align:center;top:578.14px;font-size:10.35px;line-height:10.35px;color:#ececec;font-weight:bold;">Stereo</div>
<svg class="a" style="left:0;top:0;overflow:visible" width="1" height="1"><path d="M677.79 611.09A11.9 11.9 0 1 1 695.95 602.04" fill="none" stroke="#5cbfea" stroke-width="2.1"/><path d="M695.54 604.28A11.9 11.9 0 0 1 690.41 611.09" fill="none" stroke="#22201e" stroke-width="2.1"/><path d="M684.10 601.00L696.41 603.17" stroke="#1f1d1b" stroke-width="2"/></svg>
<div class="a t" style="left:484.10px;width:400px;text-align:center;top:614.64px;font-size:10.35px;line-height:10.35px;color:#ececec;font-weight:bold;">100.00</div>
<div class="a t" style="left:715.00px;top:459.74px;font-size:10.35px;line-height:10.35px;color:#ececec;font-weight:bold;">Diffusion Network</div>
<div class="a" style="left:715.40px;top:472.30px;width:27.20px;height:12.50px;background:#f6b232;border:1px solid #33312d;"></div>
<div class="a t" style="left:529.00px;width:400px;text-align:center;top:475.54px;font-size:10.35px;line-height:10.35px;color:#2a1a1a;font-weight:normal;">High</div>
<div class="a" style="left:748.30px;top:472.30px;width:44.20px;height:12.50px;background:#47443f;border:1px solid #33312d;"></div>
<div class="a" style="left:749.30px;top:473.30px;width:34.70px;height:10.50px;background:#4a6880;"></div>
<div class="a t" style="left:570.40px;width:400px;text-align:center;top:475.54px;font-size:10.35px;line-height:10.35px;color:#ececec;font-weight:bold;">4.50 kHz</div>
<div class="a" style="left:798.60px;top:472.30px;width:27.00px;height:12.50px;background:#47443f;border:1px solid #33312d;"></div>
<div class="a" style="left:799.60px;top:473.30px;width:17.10px;height:10.50px;background:#4a6880;"></div>
<div class="a t" style="left:612.10px;width:400px;text-align:center;top:475.54px;font-size:10.35px;line-height:10.35px;color:#ececec;font-weight:bold;">0.70</div>
<div class="a" style="left:831.30px;top:472.30px;width:44.30px;height:12.50px;background:#47443f;border:1px solid #33312d;"></div>
<div class="a t" style="left:653.45px;width:400px;text-align:center;top:475.54px;font-size:10.35px;line-height:10.35px;color:#ececec;font-weight:bold;">Chorus</div>
<div class="a" style="left:715.20px;top:488.30px;width:110.60px;height:60.50px;background:#2b2926;border-radius:4px;"></div>
<div class="a" style="left:831.30px;top:488.30px;width:78.70px;height:60.50px;background:#2b2926;border-radius:4px;"></div>
<svg class="a" style="left:0;top:0;overflow:visible" width="1" height="1"><path d="M722.8 488.3V548.8" stroke="#403d39" stroke-width="1"/><path d="M728.0 488.3V548.8" stroke="#403d39" stroke-width="1"/><path d="M732.5 488.3V548.8" stroke="#403d39" stroke-width="1"/><path d="M736.2 488.3V548.8" stroke="#403d39" stroke-width="1"/><path d="M739.2 488.3V548.8" stroke="#403d39" stroke-width="1"/><path d="M741.1 488.3V548.8" stroke="#403d39" stroke-width="1"/><path d="M742.9 488.3V548.8" stroke="#56534c" stroke-width="1"/><path d="M753.8 488.3V548.8" stroke="#403d39" stroke-width="1"/><path d="M760.5 488.3V548.8" stroke="#403d39" stroke-width="1"/><path d="M765.4 488.3V548.8" stroke="#403d39" stroke-width="1"/><path d="M769.1 488.3V548.8" stroke="#403d39" stroke-width="1"/><path d="M772.1 488.3V548.8" stroke="#403d39" stroke-width="1"/><path d="M774.6 488.3V548.8" stroke="#403d39" stroke-width="1"/><path d="M777.0 488.3V548.8" stroke="#403d39" stroke-width="1"/><path d="M780.6 488.3V548.8" stroke="#56534c" stroke-width="1"/><path d="M792.8 488.3V548.8" stroke="#403d39" stroke-width="1"/><path d="M799.5 488.3V548.8" stroke="#403d39" stroke-width="1"/><path d="M803.8 488.3V548.8" stroke="#403d39" stroke-width="1"/><path d="M807.4 488.3V548.8" stroke="#403d39" stroke-width="1"/><path d="M810.5 488.3V548.8" stroke="#403d39" stroke-width="1"/><path d="M812.9 488.3V548.8" stroke="#403d39" stroke-width="1"/><path d="M815.4 488.3V548.8" stroke="#403d39" stroke-width="1"/><path d="M818.4 488.3V548.8" stroke="#56534c" stroke-width="1"/><path d="M715.2 503.8H825.8" stroke="#4a4742" stroke-width="1"/><path d="M715.2 521.4H825.8" stroke="#4a4742" stroke-width="1"/><path d="M715.2 539.7H825.8" stroke="#4a4742" stroke-width="1"/><path d="M836.4 488.3V548.8" stroke="#45423d" stroke-width="1"/><path d="M839.5 488.3V548.8" stroke="#45423d" stroke-width="1"/><path d="M841.5 488.3V548.8" stroke="#45423d" stroke-width="1"/><path d="M843.6 488.3V548.8" stroke="#45423d" stroke-width="1"/><path d="M845.3 488.3V548.8" stroke="#45423d" stroke-width="1"/><path d="M846.9 488.3V548.8" stroke="#45423d" stroke-width="1"/><path d="M848.6 488.3V548.8" stroke="#45423d" stroke-width="1"/><path d="M850.1 488.3V548.8" stroke="#5a5750" stroke-width="1"/><path d="M857.8 488.3V548.8" stroke="#45423d" stroke-width="1"/><path d="M862.5 488.3V548.8" stroke="#45423d" stroke-width="1"/><path d="M865.9 488.3V548.8" stroke="#45423d" stroke-width="1"/><path d="M868.6 488.3V548.8" stroke="#45423d" stroke-width="1"/><path d="M870.6 488.3V548.8" stroke="#45423d" stroke-width="1"/><path d="M872.7 488.3V548.8" stroke="#45423d" stroke-width="1"/><path d="M874.4 488.3V548.8" stroke="#45423d" stroke-width="1"/><path d="M876.0 488.3V548.8" stroke="#5a5750" stroke-width="1"/><path d="M883.5 488.3V548.8" stroke="#45423d" stroke-width="1"/><path d="M888.2 488.3V548.8" stroke="#45423d" stroke-width="1"/><path d="M891.6 488.3V548.8" stroke="#45423d" stroke-width="1"/><path d="M894.3 488.3V548.8" stroke="#45423d" stroke-width="1"/><path d="M896.3 488.3V548.8" stroke="#45423d" stroke-width="1"/><path d="M898.1 488.3V548.8" stroke="#45423d" stroke-width="1"/><path d="M899.7 488.3V548.8" stroke="#45423d" stroke-width="1"/><path d="M901.7 488.3V548.8" stroke="#5a5750" stroke-width="1"/><path d="M715.2 503.8H795C805 503.8 806 512.9 815 512.9H825.8" fill="none" stroke="#5cbfea" stroke-width="1.6"/><circle cx="743.1" cy="509.6" r="5.5" fill="none" stroke="#a8a59d" stroke-width="1.6"/><text x="743.1" y="513" font-size="8" fill="#a8a59d" text-anchor="middle">1</text><circle cx="800.4" cy="512.3" r="5.5" fill="none" stroke="#f6b232" stroke-width="1.8"/><text x="800.4" y="515.8" font-size="8.5" font-weight="bold" fill="#f6b232" text-anchor="middle">2</text><circle cx="844.5" cy="536" r="5.6" fill="none" stroke="#a8a59d" stroke-width="1.6"/></svg>
<div class="a" style="left:715.40px;top:552.60px;width:27.20px;height:12.10px;background:#47443f;border:1px solid #33312d;"></div>
<div class="a t" style="left:529.00px;width:400px;text-align:center;top:555.44px;font-size:10.35px;line-height:10.35px;color:#ececec;font-weight:bold;">Low</div>
<div class="a" style="left:748.30px;top:552.60px;width:44.30px;height:12.10px;background:#47443f;border:1px solid #33312d;"></div>
<div class="a" style="left:749.30px;top:553.60px;width:9.40px;height:10.10px;background:#a09d95;"></div>
<div class="a t" style="left:570.45px;width:400px;text-align:center;top:555.44px;font-size:10.35px;line-height:10.35px;color:#ececec;font-weight:bold;">90.0 Hz</div>
<div class="a" style="left:798.30px;top:552.60px;width:27.40px;height:12.10px;background:#47443f;border:1px solid #33312d;"></div>
<div class="a" style="left:799.30px;top:553.60px;width:17.60px;height:10.10px;background:#a09d95;"></div>
<div class="a t" style="left:612.00px;width:400px;text-align:center;top:555.44px;font-size:10.35px;line-height:10.35px;color:#ececec;font-weight:bold;">0.75</div>
<div class="a" style="left:831.30px;top:552.60px;width:44.30px;height:12.10px;background:#47443f;border:1px solid #33312d;"></div>
<div class="a" style="left:832.30px;top:553.60px;width:2.70px;height:10.10px;background:#a09d95;"></div>
<div class="a t" style="left:653.45px;width:400px;text-align:center;top:555.44px;font-size:10.35px;line-height:10.35px;color:#ececec;font-weight:bold;">0.02 Hz</div>
<div class="a" style="left:880.30px;top:552.60px;width:29.30px;height:12.10px;background:#47443f;border:1px solid #33312d;"></div>
<div class="a" style="left:881.30px;top:553.60px;width:2.20px;height:10.10px;background:#a09d95;"></div>
<div class="a t" style="left:694.95px;width:400px;text-align:center;top:555.44px;font-size:10.35px;line-height:10.35px;color:#ececec;font-weight:bold;">0.02</div>
<div class="a t" style="left:740.30px;width:400px;text-align:center;top:460.04px;font-size:10.35px;line-height:10.35px;color:#ececec;font-weight:bold;">Reflect</div>
<svg class="a" style="left:0;top:0;overflow:visible" width="1" height="1"><path d="M934.15 493.04A11.6 11.6 0 0 1 939.29 471.64" fill="none" stroke="#5cbfea" stroke-width="2.1"/><path d="M941.51 471.66A11.6 11.6 0 0 1 946.45 493.04" fill="none" stroke="#22201e" stroke-width="2.1"/><path d="M940.30 483.20L940.30 471.00" stroke="#1f1d1b" stroke-width="2"/></svg>
<div class="a t" style="left:740.30px;width:400px;text-align:center;top:496.84px;font-size:10.35px;line-height:10.35px;color:#ececec;font-weight:bold;">0.0 dB</div>
<div class="a t" style="left:740.30px;width:400px;text-align:center;top:518.64px;font-size:10.35px;line-height:10.35px;color:#ececec;font-weight:bold;">Diffuse</div>
<svg class="a" style="left:0;top:0;overflow:visible" width="1" height="1"><path d="M934.15 552.24A11.6 11.6 0 0 1 939.29 530.84" fill="none" stroke="#5cbfea" stroke-width="2.1"/><path d="M941.51 530.86A11.6 11.6 0 0 1 946.45 552.24" fill="none" stroke="#22201e" stroke-width="2.1"/><path d="M940.30 542.40L940.30 530.20" stroke="#1f1d1b" stroke-width="2"/></svg>
<div class="a t" style="left:740.30px;width:400px;text-align:center;top:556.04px;font-size:10.35px;line-height:10.35px;color:#ececec;font-weight:bold;">0.0 dB</div>
<div class="a t" style="left:542.50px;width:400px;text-align:center;top:577.24px;font-size:10.35px;line-height:10.35px;color:#ececec;font-weight:bold;">Decay Time</div>
<svg class="a" style="left:0;top:0;overflow:visible" width="1" height="1"><path d="M736.09 610.99A11.9 11.9 0 0 1 735.57 591.15" fill="none" stroke="#5cbfea" stroke-width="2.1"/><path d="M737.56 590.03A11.9 11.9 0 0 1 748.71 610.99" fill="none" stroke="#22201e" stroke-width="2.1"/><path d="M742.40 600.90L736.15 590.07" stroke="#1f1d1b" stroke-width="2"/></svg>
<div class="a t" style="left:542.50px;width:400px;text-align:center;top:614.24px;font-size:10.35px;line-height:10.35px;color:#ececec;font-weight:bold;">1.92 s</div>
<div class="a" style="left:781.30px;top:575.30px;width:45.40px;height:12.20px;background:#47443f;border:1px solid #33312d;"></div>
<div class="a t" style="left:604.00px;width:400px;text-align:center;top:578.24px;font-size:10.35px;line-height:10.35px;color:#ececec;font-weight:bold;">Freeze</div>
<div class="a" style="left:781.30px;top:592.20px;width:20.50px;height:12.60px;background:#f6b232;border:1px solid #33312d;"></div>
<div class="a t" style="left:591.55px;width:400px;text-align:center;top:595.54px;font-size:10.35px;line-height:10.35px;color:#222;font-weight:normal;">Flat</div>
<div class="a" style="left:806.20px;top:592.20px;width:20.50px;height:12.60px;background:#f6b232;border:1px solid #33312d;"></div>
<div class="a t" style="left:616.45px;width:400px;text-align:center;top:595.54px;font-size:10.35px;line-height:10.35px;color:#222;font-weight:normal;">Cut</div>
<div class="a t" style="left:651.50px;width:400px;text-align:center;top:577.14px;font-size:10.35px;line-height:10.35px;color:#ececec;font-weight:bold;">Density</div>
<svg class="a" style="left:0;top:0;overflow:visible" width="1" height="1"><path d="M844.19 610.69A11.9 11.9 0 1 1 856.98 590.62" fill="none" stroke="#5cbfea" stroke-width="2.1"/><path d="M858.77 592.04A11.9 11.9 0 0 1 856.81 610.69" fill="none" stroke="#22201e" stroke-width="2.1"/><path d="M850.50 600.60L858.20 590.75" stroke="#1f1d1b" stroke-width="2"/></svg>
<div class="a t" style="left:650.50px;width:400px;text-align:center;top:613.94px;font-size:10.35px;line-height:10.35px;color:#ececec;font-weight:bold;">60 %</div>
<div class="a t" style="left:692.00px;width:400px;text-align:center;top:577.14px;font-size:10.35px;line-height:10.35px;color:#ececec;font-weight:bold;">Scale</div>
<svg class="a" style="left:0;top:0;overflow:visible" width="1" height="1"><path d="M885.69 610.69A11.9 11.9 0 0 1 883.59 592.19" fill="none" stroke="#5cbfea" stroke-width="2.1"/><path d="M885.35 590.73A11.9 11.9 0 1 1 898.31 610.69" fill="none" stroke="#22201e" stroke-width="2.1"/><path d="M892.00 600.60L883.97 591.02" stroke="#1f1d1b" stroke-width="2"/></svg>
<div class="a t" style="left:692.00px;width:400px;text-align:center;top:613.94px;font-size:10.35px;line-height:10.35px;color:#ececec;font-weight:bold;">40 %</div>
<div class="a t" style="left:741.00px;width:400px;text-align:center;top:578.14px;font-size:10.35px;line-height:10.35px;color:#ececec;font-weight:bold;">Dry/Wet</div>
<svg class="a" style="left:0;top:0;overflow:visible" width="1" height="1"><path d="M934.29 610.89A11.9 11.9 0 0 1 929.00 598.12" fill="none" stroke="#5cbfea" stroke-width="2.1"/><path d="M929.73 595.96A11.9 11.9 0 1 1 946.91 610.89" fill="none" stroke="#22201e" stroke-width="2.1"/><path d="M940.60 600.80L928.71 596.94" stroke="#1f1d1b" stroke-width="2"/></svg>
<div class="a t" style="left:740.60px;width:400px;text-align:center;top:614.94px;font-size:10.35px;line-height:10.35px;color:#ececec;font-weight:bold;">27 %</div>
<div class="a" style="left:92.00px;top:639.00px;width:518.00px;height:22.00px;background:#6b685f;border:3px solid #46433d;border-radius:3px;"></div>
<div class="a" style="left:619.00px;top:639.00px;width:206.00px;height:22.00px;background:#46433d;border-radius:3px;"></div>
<div class="a" style="left:622.00px;top:642.00px;width:200.00px;height:16.00px;background:#a3a096;"></div>
<svg class="a" style="left:0;top:0;overflow:visible" width="1" height="1"><defs><clipPath id="c2"><rect x="622" y="642" width="200" height="16"/></clipPath></defs><g clip-path="url(#c2)"><polygon points="622.0,644.40 625.3,644.60 631.6,644.45 638.4,644.55 645.3,644.90 649.4,645.50 649.4,647.30 645.3,647.90 638.4,648.25 631.6,648.35 625.3,648.20 622.0,648.40" fill="#25231f"/><polygon points="622.0,652.50 625.3,652.70 631.6,652.55 638.4,652.65 645.3,653.00 649.4,653.60 649.4,655.40 645.3,656.00 638.4,656.35 631.6,656.45 625.3,656.30 622.0,656.50" fill="#25231f"/><polygon points="649.4,644.40 652.7,644.60 659.0,644.45 665.8,644.55 672.7,644.90 676.8,645.50 676.8,647.30 672.7,647.90 665.8,648.25 659.0,648.35 652.7,648.20 649.4,648.40" fill="#25231f"/><polygon points="649.4,652.50 652.7,652.70 659.0,652.55 665.8,652.65 672.7,653.00 676.8,653.60 676.8,655.40 672.7,656.00 665.8,656.35 659.0,656.45 652.7,656.30 649.4,656.50" fill="#25231f"/><polygon points="676.8,644.40 680.1,644.60 686.4,644.45 693.2,644.55 700.1,644.90 704.2,645.50 704.2,647.30 700.1,647.90 693.2,648.25 686.4,648.35 680.1,648.20 676.8,648.40" fill="#25231f"/><polygon points="676.8,652.50 680.1,652.70 686.4,652.55 693.2,652.65 700.1,653.00 704.2,653.60 704.2,655.40 700.1,656.00 693.2,656.35 686.4,656.45 680.1,656.30 676.8,656.50" fill="#25231f"/><polygon points="704.2,644.40 707.5,644.60 713.8,644.45 720.6,644.55 727.5,644.90 731.6,645.50 731.6,647.30 727.5,647.90 720.6,648.25 713.8,648.35 707.5,648.20 704.2,648.40" fill="#25231f"/><polygon points="704.2,652.50 707.5,652.70 713.8,652.55 720.6,652.65 727.5,653.00 731.6,653.60 731.6,655.40 727.5,656.00 720.6,656.35 713.8,656.45 707.5,656.30 704.2,656.50" fill="#25231f"/><polygon points="731.6,644.40 734.9,644.60 741.2,644.45 748.0,644.55 754.9,644.90 759.0,645.50 759.0,647.30 754.9,647.90 748.0,648.25 741.2,648.35 734.9,648.20 731.6,648.40" fill="#25231f"/><polygon points="731.6,652.50 734.9,652.70 741.2,652.55 748.0,652.65 754.9,653.00 759.0,653.60 759.0,655.40 754.9,656.00 748.0,656.35 741.2,656.45 734.9,656.30 731.6,656.50" fill="#25231f"/><polygon points="759.0,644.40 762.3,644.60 768.6,644.45 775.4,644.55 782.3,644.90 786.4,645.50 786.4,647.30 782.3,647.90 775.4,648.25 768.6,648.35 762.3,648.20 759.0,648.40" fill="#25231f"/><polygon points="759.0,652.50 762.3,652.70 768.6,652.55 775.4,652.65 782.3,653.00 786.4,653.60 786.4,655.40 782.3,656.00 775.4,656.35 768.6,656.45 762.3,656.30 759.0,656.50" fill="#25231f"/><polygon points="786.4,644.40 789.7,644.60 796.0,644.45 802.8,644.55 809.7,644.90 813.8,645.50 813.8,647.30 809.7,647.90 802.8,648.25 796.0,648.35 789.7,648.20 786.4,648.40" fill="#25231f"/><polygon points="786.4,652.50 789.7,652.70 796.0,652.55 802.8,652.65 809.7,653.00 813.8,653.60 813.8,655.40 809.7,656.00 802.8,656.35 796.0,656.45 789.7,656.30 786.4,656.50" fill="#25231f"/><polygon points="813.8,644.40 817.1,644.60 823.4,644.45 830.2,644.55 837.1,644.90 841.2,645.50 841.2,647.30 837.1,647.90 830.2,648.25 823.4,648.35 817.1,648.20 813.8,648.40" fill="#25231f"/><polygon points="813.8,652.50 817.1,652.70 823.4,652.55 830.2,652.65 837.1,653.00 841.2,653.60 841.2,655.40 837.1,656.00 830.2,656.35 823.4,656.45 817.1,656.30 813.8,656.50" fill="#25231f"/><polygon points="841.2,644.40 844.5,644.60 850.8,644.45 857.6,644.55 864.5,644.90 868.6,645.50 868.6,647.30 864.5,647.90 857.6,648.25 850.8,648.35 844.5,648.20 841.2,648.40" fill="#25231f"/><polygon points="841.2,652.50 844.5,652.70 850.8,652.55 857.6,652.65 864.5,653.00 868.6,653.60 868.6,655.40 864.5,656.00 857.6,656.35 850.8,656.45 844.5,656.30 841.2,656.50" fill="#25231f"/></g></svg>
<div class="a t" style="left:837.00px;top:646.43px;font-size:10.6px;line-height:10.6px;color:#f0f0f0;font-weight:bold;">chords</div>
<div class="a" style="left:875.00px;top:642.00px;width:66.00px;height:16.00px;background:#8a877f;"></div>
<div class="a" style="left:876.00px;top:644.00px;width:3.00px;height:12.00px;background:#77746c;"></div>
<div class="a" style="left:934.00px;top:644.00px;width:6.00px;height:12.00px;background:#77746c;"></div>
<div class="a" style="left:882.00px;top:644.00px;width:10.00px;height:13.00px;background:#2a2826;"></div>
<div class="a" style="left:884.00px;top:645.00px;width:2.00px;height:11.00px;background:#1e1c1a;"></div>
<div class="a" style="left:887.50px;top:645.00px;width:2.00px;height:11.00px;background:#1e1c1a;"></div>
<div class="a" style="left:892.00px;top:644.00px;width:4.00px;height:1.50px;background:#e08838;"></div>
<div class="a" style="left:892.00px;top:647.00px;width:4.00px;height:2.00px;background:#c8503a;"></div>
<div class="a" style="left:892.00px;top:650.00px;width:4.00px;height:6.00px;background:#6e6b63;"></div>
<div class="a" style="left:897.00px;top:642.00px;width:1.00px;height:16.00px;background:#5a5750;"></div>
<div class="a" style="left:898.50px;top:644.50px;width:7.50px;height:1.50px;background:#e08838;"></div>
<div class="a" style="left:899.00px;top:646.50px;width:7.00px;height:4.50px;background:#2a2826;"></div>
<div class="a" style="left:907.00px;top:645.50px;width:7.00px;height:5.50px;background:#2a2826;"></div>
<div class="a" style="left:899.00px;top:652.00px;width:14.00px;height:4.00px;background:#7a776f;"></div>
<div class="a" style="left:915.00px;top:643.00px;width:3.00px;height:14.00px;background:#75726a;"></div>
<div class="a" style="left:915.50px;top:648.00px;width:2.00px;height:2.00px;background:#5080c0;"></div>
<div class="a" style="left:919.00px;top:644.50px;width:4.00px;height:1.50px;background:#e08838;"></div>
<div class="a" style="left:923.50px;top:644.50px;width:2.00px;height:1.50px;background:#5080c0;"></div>
<div class="a" style="left:927.00px;top:644.50px;width:2.00px;height:1.50px;background:#5080c0;"></div>
<div class="a" style="left:919.00px;top:646.50px;width:11.00px;height:4.50px;background:#2a2826;"></div>
<div class="a" style="left:925.00px;top:655.00px;width:3.50px;height:1.50px;background:#e08838;"></div>
<div class="a" style="left:919.00px;top:652.00px;width:12.00px;height:2.50px;background:#75726a;"></div>
<div class="a" style="left:935.00px;top:646.00px;width:3.00px;height:5.00px;background:#2a2826;"></div>
<div class="a" style="left:880.00px;top:640.00px;width:53.00px;height:20.00px;border:2px solid #000;"></div>
<div class="a" style="left:953.30px;top:639.90px;width:19.00px;height:19.00px;background:#4a4742;border-radius:50%;"></div>
<svg class="a" style="left:952px;top:639px;overflow:visible" width="21" height="21" viewBox="0 0 21 21"><polygon points="5,14.8 16.2,14.8 10.6,4" fill="#57544d"/></svg>
<div class="a" style="left:332px;top:31px;width:262px;height:676px;border-radius:5px;background:#5a5750;box-shadow:0 12px 30px rgba(0,0,0,0.35),0 0 2px rgba(0,0,0,0.45);"></div>
<div class="a" style="left:332.00px;top:31.00px;width:262.00px;height:22.00px;background:linear-gradient(#e6e7e9,#d3d4d6);border-radius:5px 5px 0 0;border-top:1px solid #f2f2f2;border-bottom:1px solid #c4c5c7;"></div>
<div class="a t" style="left:263.00px;width:400px;text-align:center;top:37.40px;font-size:13.7px;line-height:13.7px;color:#4a4a4a;font-weight:normal;">Export Audio/Video</div>
<div class="a" style="left:339.00px;top:60.00px;width:248.00px;height:641.00px;background:#46433d;border-radius:6px;"></div>
<div class="a" style="left:346.00px;top:67.00px;width:234.00px;height:627.00px;background:#65625a;"></div>
<div class="a t" style="left:354.00px;top:76.24px;font-size:10.35px;line-height:10.35px;color:#ececec;font-weight:bold;">Selection</div>
<div class="a" style="left:402.52px;top:79.00px;width:170.48px;height:1.00px;background:#3c3a36;"></div>
<div class="a t" style="left:354.00px;top:96.24px;font-size:10.35px;line-height:10.35px;color:#ececec;font-weight:bold;">Rendered Track</div>
<div class="a" style="left:463.00px;top:93.00px;width:109.00px;height:13.00px;background:#403d38;border:1px solid #2f2d2a;"></div>
<div class="a t" style="left:466.00px;top:96.24px;font-size:10.35px;line-height:10.35px;color:#ececec;font-weight:bold;">Master</div>
<svg class="a" style="left:561px;top:96px;overflow:visible" width="9" height="8" viewBox="0 0 9 8"><polygon points="1.2,1.2 7.8,1.2 4.5,6.6" fill="#f2f2f2"/></svg>
<div class="a t" style="left:354.00px;top:118.24px;font-size:10.35px;line-height:10.35px;color:#ececec;font-weight:bold;">Render Start</div>
<div class="a" style="left:496.00px;top:115.00px;width:28.00px;height:12.60px;background:#403d38;border:1px solid #2f2d2a;"></div>
<div class="a t" style="left:121.80px;width:400px;text-align:right;top:118.74px;font-size:10.35px;line-height:10.35px;color:#ececec;font-weight:bold;">131</div>
<div class="a" style="left:526.00px;top:115.00px;width:22.00px;height:12.60px;background:#403d38;border:1px solid #2f2d2a;"></div>
<div class="a t" style="left:145.80px;width:400px;text-align:right;top:118.74px;font-size:10.35px;line-height:10.35px;color:#ececec;font-weight:bold;">1</div>
<div class="a" style="left:550.00px;top:115.00px;width:22.00px;height:12.60px;background:#403d38;border:1px solid #2f2d2a;"></div>
<div class="a t" style="left:169.80px;width:400px;text-align:right;top:118.74px;font-size:10.35px;line-height:10.35px;color:#ececec;font-weight:bold;">1</div>
<div class="a t" style="left:354.00px;top:140.24px;font-size:10.35px;line-height:10.35px;color:#ececec;font-weight:bold;">Render Length</div>
<div class="a" style="left:500.00px;top:137.00px;width:28.00px;height:12.60px;background:#403d38;border:1px solid #2f2d2a;"></div>
<div class="a t" style="left:125.80px;width:400px;text-align:right;top:140.74px;font-size:10.35px;line-height:10.35px;color:#ececec;font-weight:bold;">14</div>
<div class="a" style="left:530.00px;top:137.00px;width:19.00px;height:12.60px;background:#403d38;border:1px solid #2f2d2a;"></div>
<div class="a t" style="left:146.80px;width:400px;text-align:right;top:140.74px;font-size:10.35px;line-height:10.35px;color:#ececec;font-weight:bold;">2</div>
<div class="a" style="left:551.00px;top:137.00px;width:19.00px;height:12.60px;background:#403d38;border:1px solid #2f2d2a;"></div>
<div class="a t" style="left:167.80px;width:400px;text-align:right;top:140.74px;font-size:10.35px;line-height:10.35px;color:#ff3b3b;font-weight:bold;">3</div>
<div class="a t" style="left:354.00px;top:168.24px;font-size:10.35px;line-height:10.35px;color:#ececec;font-weight:bold;">Rendering Options</div>
<div class="a" style="left:449.65px;top:171.00px;width:123.35px;height:1.00px;background:#3c3a36;"></div>
<div class="a t" style="left:354.00px;top:188.24px;font-size:10.35px;line-height:10.35px;color:#ececec;font-weight:bold;">Include Return and Master Effects</div>
<div class="a" style="left:524.00px;top:185.00px;width:48.00px;height:12.60px;background:#55524b;border:1px solid #2f2d2a;"></div>
<div class="a t" style="left:348.00px;width:400px;text-align:center;top:188.24px;font-size:10.35px;line-height:10.35px;color:#8d8a82;font-weight:normal;">Off</div>
<div class="a t" style="left:354.00px;top:210.24px;font-size:10.35px;line-height:10.35px;color:#ececec;font-weight:bold;">Render as Loop</div>
<div class="a" style="left:524.00px;top:207.00px;width:48.00px;height:12.60px;background:#55524b;border:1px solid #2f2d2a;"></div>
<div class="a t" style="left:348.00px;width:400px;text-align:center;top:210.24px;font-size:10.35px;line-height:10.35px;color:#ececec;font-weight:bold;">Off</div>
<div class="a t" style="left:354.00px;top:232.24px;font-size:10.35px;line-height:10.35px;color:#ececec;font-weight:bold;">Convert to Mono</div>
<div class="a" style="left:524.00px;top:229.00px;width:48.00px;height:12.60px;background:#55524b;border:1px solid #2f2d2a;"></div>
<div class="a t" style="left:348.00px;width:400px;text-align:center;top:232.24px;font-size:10.35px;line-height:10.35px;color:#ececec;font-weight:bold;">Off</div>
<div class="a t" style="left:354.00px;top:254.24px;font-size:10.35px;line-height:10.35px;color:#ececec;font-weight:bold;">Normalize</div>
<div class="a" style="left:524.00px;top:251.00px;width:48.00px;height:12.60px;background:#55524b;border:1px solid #2f2d2a;"></div>
<div class="a t" style="left:348.00px;width:400px;text-align:center;top:254.24px;font-size:10.35px;line-height:10.35px;color:#ececec;font-weight:bold;">Off</div>
<div class="a t" style="left:354.00px;top:276.24px;font-size:10.35px;line-height:10.35px;color:#ececec;font-weight:bold;">Create Analysis File</div>
<div class="a" style="left:524.00px;top:273.00px;width:48.00px;height:12.60px;background:#55524b;border:1px solid #2f2d2a;"></div>
<div class="a t" style="left:348.00px;width:400px;text-align:center;top:276.24px;font-size:10.35px;line-height:10.35px;color:#ececec;font-weight:bold;">Off</div>
<div class="a t" style="left:354.00px;top:298.24px;font-size:10.35px;line-height:10.35px;color:#ececec;font-weight:bold;">Sample Rate</div>
<div class="a" style="left:524.00px;top:295.00px;width:48.00px;height:13.00px;background:#403d38;border:1px solid #2f2d2a;"></div>
<div class="a t" style="left:527.00px;top:298.24px;font-size:10.35px;line-height:10.35px;color:#ececec;font-weight:bold;">44100</div>
<svg class="a" style="left:561px;top:298px;overflow:visible" width="9" height="8" viewBox="0 0 9 8"><polygon points="1.2,1.2 7.8,1.2 4.5,6.6" fill="#f2f2f2"/></svg>
<div class="a t" style="left:354.00px;top:322.24px;font-size:10.35px;line-height:10.35px;color:#ececec;font-weight:bold;">Project will be rendered at 44100 Hz.</div>
<div class="a t" style="left:354.00px;top:362.24px;font-size:10.35px;line-height:10.35px;color:#ececec;font-weight:bold;">PCM</div>
<div class="a" style="left:379.50px;top:365.00px;width:193.50px;height:1.00px;background:#3c3a36;"></div>
<div class="a t" style="left:354.00px;top:383.24px;font-size:10.35px;line-height:10.35px;color:#ececec;font-weight:bold;">Encode PCM</div>
<div class="a" style="left:524.00px;top:380.00px;width:48.00px;height:12.60px;background:#f6b232;border:1px solid #3a3834;"></div>
<div class="a t" style="left:348.00px;width:400px;text-align:center;top:383.24px;font-size:10.35px;line-height:10.35px;color:#2a2a2a;font-weight:normal;">On</div>
<div class="a t" style="left:354.00px;top:405.24px;font-size:10.35px;line-height:10.35px;color:#ececec;font-weight:bold;">File Type</div>
<div class="a" style="left:494.00px;top:402.00px;width:78.00px;height:13.00px;background:#403d38;border:1px solid #2f2d2a;"></div>
<div class="a t" style="left:497.00px;top:405.24px;font-size:10.35px;line-height:10.35px;color:#ececec;font-weight:bold;">WAV</div>
<svg class="a" style="left:561px;top:405px;overflow:visible" width="9" height="8" viewBox="0 0 9 8"><polygon points="1.2,1.2 7.8,1.2 4.5,6.6" fill="#f2f2f2"/></svg>
<div class="a t" style="left:354.00px;top:427.24px;font-size:10.35px;line-height:10.35px;color:#ececec;font-weight:bold;">Bit Depth</div>
<div class="a" style="left:524.00px;top:424.00px;width:48.00px;height:13.00px;background:#403d38;border:1px solid #2f2d2a;"></div>
<div class="a t" style="left:527.00px;top:427.24px;font-size:10.35px;line-height:10.35px;color:#ececec;font-weight:bold;">24</div>
<svg class="a" style="left:561px;top:427px;overflow:visible" width="9" height="8" viewBox="0 0 9 8"><polygon points="1.2,1.2 7.8,1.2 4.5,6.6" fill="#f2f2f2"/></svg>
<div class="a t" style="left:354.00px;top:449.24px;font-size:10.35px;line-height:10.35px;color:#ececec;font-weight:bold;">Dither Options</div>
<div class="a" style="left:494.00px;top:446.00px;width:78.00px;height:13.00px;background:#403d38;border:1px solid #2f2d2a;"></div>
<div class="a t" style="left:497.00px;top:449.24px;font-size:10.35px;line-height:10.35px;color:#ececec;font-weight:bold;">Triangular</div>
<svg class="a" style="left:561px;top:449px;overflow:visible" width="9" height="8" viewBox="0 0 9 8"><polygon points="1.2,1.2 7.8,1.2 4.5,6.6" fill="#f2f2f2"/></svg>
<div class="a t" style="left:354.00px;top:477.24px;font-size:10.35px;line-height:10.35px;color:#ececec;font-weight:bold;">MP3</div>
<div class="a" style="left:377.78px;top:480.00px;width:195.22px;height:1.00px;background:#3c3a36;"></div>
<div class="a t" style="left:354.00px;top:497.24px;font-size:10.35px;line-height:10.35px;color:#ececec;font-weight:bold;">Encode MP3 (CBR 320)</div>
<div class="a" style="left:524.00px;top:494.00px;width:48.00px;height:12.60px;background:#55524b;border:1px solid #2f2d2a;"></div>
<div class="a t" style="left:348.00px;width:400px;text-align:center;top:497.24px;font-size:10.35px;line-height:10.35px;color:#ececec;font-weight:bold;">Off</div>
<div class="a t" style="left:354.00px;top:525.24px;font-size:10.35px;line-height:10.35px;color:#ececec;font-weight:bold;">SoundCloud</div>
<div class="a" style="left:418.01px;top:528.00px;width:154.99px;height:1.00px;background:#3c3a36;"></div>
<div class="a t" style="left:354.00px;top:545.24px;font-size:10.35px;line-height:10.35px;color:#ececec;font-weight:bold;">Upload Audio to SoundCloud</div>
<div class="a" style="left:524.00px;top:542.00px;width:48.00px;height:12.60px;background:#55524b;border:1px solid #2f2d2a;"></div>
<div class="a t" style="left:348.00px;width:400px;text-align:center;top:545.24px;font-size:10.35px;line-height:10.35px;color:#ececec;font-weight:bold;">Off</div>
<div class="a t" style="left:354.00px;top:573.24px;font-size:10.35px;line-height:10.35px;color:#ececec;font-weight:bold;">Video</div>
<div class="a" style="left:384.49px;top:576.00px;width:188.51px;height:1.00px;background:#3c3a36;"></div>
<div class="a t" style="left:354.00px;top:593.24px;font-size:10.35px;line-height:10.35px;color:#ececec;font-weight:bold;">Create Video</div>
<div class="a" style="left:524.00px;top:590.00px;width:48.00px;height:12.60px;background:#55524b;border:1px solid #2f2d2a;"></div>
<div class="a t" style="left:348.00px;width:400px;text-align:center;top:593.24px;font-size:10.35px;line-height:10.35px;color:#8d8a82;font-weight:normal;">Off</div>
<div class="a t" style="left:354.00px;top:615.24px;font-size:10.35px;line-height:10.35px;color:#ececec;font-weight:bold;">Video Encoder</div>
<div class="a" style="left:454.00px;top:612.00px;width:118.00px;height:13.00px;background:#5f5c55;border:1px solid #2f2d2a;"></div>
<div class="a t" style="left:457.00px;top:615.24px;font-size:10.35px;line-height:10.35px;color:#ececec;font-weight:bold;">MPEG-4 movie</div>
<svg class="a" style="left:561px;top:615px;overflow:visible" width="9" height="8" viewBox="0 0 9 8"><polygon points="1.2,1.2 7.8,1.2 4.5,6.6" fill="#f2f2f2"/></svg>
<div class="a t" style="left:354.00px;top:637.24px;font-size:10.35px;line-height:10.35px;color:#ececec;font-weight:bold;">Encoder Settings</div>
<div class="a" style="left:524.00px;top:634.00px;width:48.00px;height:12.80px;background:#5a574f;border:1px solid #3a3834;border-radius:7px;"></div>
<div class="a t" style="left:348.00px;width:400px;text-align:center;top:637.24px;font-size:10.35px;line-height:10.35px;color:#8d8a82;font-weight:normal;">Edit</div>
<div class="a" style="left:392.00px;top:672.00px;width:70.00px;height:14.60px;background:#55524b;border:2px solid #33312d;border-radius:8px;"></div>
<div class="a t" style="left:227.00px;width:400px;text-align:center;top:676.24px;font-size:10.35px;line-height:10.35px;color:#ececec;font-weight:bold;">Export</div>
<div class="a" style="left:465.00px;top:673.00px;width:68.00px;height:12.80px;background:#55524b;border:1px solid #33312d;border-radius:7px;"></div>
<div class="a t" style="left:299.00px;width:400px;text-align:center;top:676.24px;font-size:10.35px;line-height:10.35px;color:#ececec;font-weight:bold;">Cancel</div>
</body></html>
